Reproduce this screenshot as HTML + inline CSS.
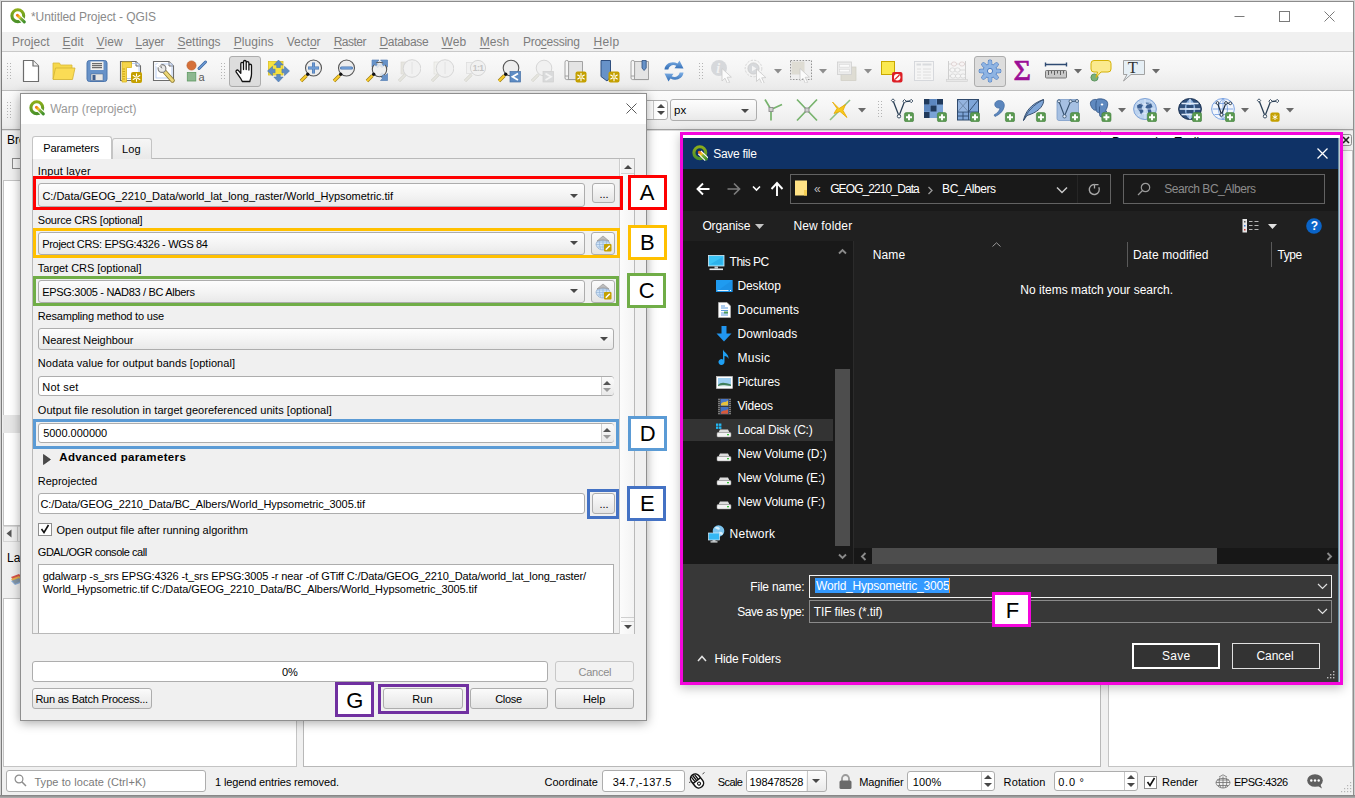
<!DOCTYPE html>
<html>
<head>
<meta charset="utf-8">
<title>QGIS - Warp (reproject)</title>
<style>
*{box-sizing:border-box;margin:0;padding:0}
html,body{width:1355px;height:798px;overflow:hidden;background:#f0f0f0;font-family:"Liberation Sans",sans-serif;font-size:11px;color:#000}
div,svg{position:absolute}
.t{position:absolute;white-space:nowrap;line-height:1}
u{text-decoration-skip-ink:none;text-underline-offset:1.500px}
.combo{border:1px solid #adadad;border-radius:3px;background:linear-gradient(#fdfdfd,#f4f4f4 50%,#e9e9e9)}
.edit{border:1px solid #adadad;border-radius:3px;background:#fff}
.btn{border:1px solid #adadad;border-radius:3px;background:linear-gradient(#fbfbfb,#f0f0f0 50%,#e4e4e4)}
.ad{width:0;height:0;border-left:4px solid transparent;border-right:4px solid transparent;border-top:4px solid #484848}
.au{width:0;height:0;border-left:4px solid transparent;border-right:4px solid transparent;border-bottom:4px solid #484848}
.hl{border-style:solid;border-width:3px;background:transparent}
.lb{border-style:solid;border-width:3px;background:#fff}
</style>
</head>
<body>
<div style="position:absolute;left:0px;top:0px;width:1355px;height:798px;background:#f0f0f0"></div>
<div style="position:absolute;left:0px;top:0px;width:1355px;height:32px;background:#fff"></div>
<svg style="position:absolute;left:10px;top:8px;" width="16" height="16" viewBox="0 0 16 16"><defs><linearGradient id="lgA1" x1="0" y1="0" x2="0" y2="1"><stop offset="0" stop-color="#8cad1a"/><stop offset="1" stop-color="#4c9229"/></linearGradient>
<linearGradient id="lgB1" x1="0" y1="0" x2="1" y2="1"><stop offset="0" stop-color="#ee7913"/><stop offset="0.3" stop-color="#f5c828"/><stop offset="0.5" stop-color="#7fb13a"/><stop offset="1" stop-color="#3f8f2a"/></linearGradient></defs>
<circle cx="7.8" cy="7.7" r="5.9" fill="none" stroke="url(#lgA1)" stroke-width="3.1"/>
<path d="M7.6 7.4 L14.6 14.2" stroke="#fff" stroke-width="5" stroke-linecap="butt"/>
<path d="M7.4 7.2 L14.3 13.9" stroke="url(#lgB1)" stroke-width="2.9" stroke-linecap="round"/></svg>
<div class="t" style="left:31.00px;top:11.02px;font-size:12px;line-height:1;color:#8a8a8a;letter-spacing:-0.071px;">*Untitled Project - QGIS</div>
<svg style="position:absolute;left:1234px;top:10px;" width="12" height="12" viewBox="0 0 12 12"><path d="M0.5 6.5H10.5" stroke="#7a7a7a" stroke-width="1"/></svg>
<svg style="position:absolute;left:1279px;top:11px;" width="11" height="11" viewBox="0 0 11 11"><rect x="0.5" y="0.5" width="10" height="10" fill="none" stroke="#7a7a7a" stroke-width="1"/></svg>
<svg style="position:absolute;left:1324px;top:11px;" width="11" height="11" viewBox="0 0 11 11"><path d="M0.5 0.5L10.5 10.5M10.5 0.5L0.5 10.5" stroke="#7a7a7a" stroke-width="1"/></svg>
<div style="position:absolute;left:0px;top:32px;width:1355px;height:20px;background:#f0f0f0"></div>
<div class="t" style="left:12.00px;top:36.02px;font-size:12px;line-height:1;color:#7d7d7d;letter-spacing:0.037px;text-underline-offset:1px;">Pro<u>j</u>ect</div>
<div class="t" style="left:62.50px;top:36.02px;font-size:12px;line-height:1;color:#7d7d7d;letter-spacing:0.131px;text-underline-offset:1px;"><u>E</u>dit</div>
<div class="t" style="left:96.50px;top:36.02px;font-size:12px;line-height:1;color:#7d7d7d;letter-spacing:0.094px;text-underline-offset:1px;"><u>V</u>iew</div>
<div class="t" style="left:135.50px;top:36.02px;font-size:12px;line-height:1;color:#7d7d7d;letter-spacing:-0.238px;text-underline-offset:1px;"><u>L</u>ayer</div>
<div class="t" style="left:177.50px;top:36.02px;font-size:12px;line-height:1;color:#7d7d7d;letter-spacing:-0.040px;text-underline-offset:1px;"><u>S</u>ettings</div>
<div class="t" style="left:233.70px;top:36.02px;font-size:12px;line-height:1;color:#7d7d7d;letter-spacing:0.087px;text-underline-offset:1px;"><u>P</u>lugins</div>
<div class="t" style="left:286.70px;top:36.02px;font-size:12px;line-height:1;color:#7d7d7d;letter-spacing:-0.030px;text-underline-offset:1px;">Vect<u>o</u>r</div>
<div class="t" style="left:333.70px;top:36.02px;font-size:12px;line-height:1;color:#7d7d7d;letter-spacing:-0.533px;text-underline-offset:1px;"><u>R</u>aster</div>
<div class="t" style="left:379.50px;top:36.02px;font-size:12px;line-height:1;color:#7d7d7d;letter-spacing:-0.328px;text-underline-offset:1px;"><u>D</u>atabase</div>
<div class="t" style="left:441.50px;top:36.02px;font-size:12px;line-height:1;color:#7d7d7d;letter-spacing:0.156px;text-underline-offset:1px;"><u>W</u>eb</div>
<div class="t" style="left:479.70px;top:36.02px;font-size:12px;line-height:1;color:#7d7d7d;letter-spacing:0.012px;text-underline-offset:1px;"><u>M</u>esh</div>
<div class="t" style="left:523.00px;top:36.02px;font-size:12px;line-height:1;color:#7d7d7d;letter-spacing:-0.277px;text-underline-offset:1px;">Pro<u>c</u>essing</div>
<div class="t" style="left:593.50px;top:36.02px;font-size:12px;line-height:1;color:#7d7d7d;letter-spacing:0.297px;text-underline-offset:1px;"><u>H</u>elp</div>
<div style="position:absolute;left:0px;top:51px;width:1355px;height:1px;background:#c9c9c9"></div>
<div style="position:absolute;left:0px;top:52px;width:1355px;height:39px;background:linear-gradient(#fafafa,#f5f5f5 45%,#ececec 90%,#e8e8e8);border-bottom:1px solid #bdbdbd"></div>
<div style="position:absolute;left:0px;top:91px;width:1355px;height:39px;background:linear-gradient(#fbfbfb,#f5f5f5 45%,#ececec 90%,#e6e6e6);border-bottom:1px solid #a0a0a0"></div>
<div style="position:absolute;left:0px;top:130px;width:1355px;height:1px;background:#dcdcdc"></div>
<svg style="position:absolute;left:7px;top:63px;" width="5" height="18" viewBox="0 0 5 18"><rect x="0" y="0" width="1" height="1" fill="#b4b4b4"/><rect x="3" y="0" width="1" height="1" fill="#b4b4b4"/><rect x="0" y="3" width="1" height="1" fill="#b4b4b4"/><rect x="3" y="3" width="1" height="1" fill="#b4b4b4"/><rect x="0" y="6" width="1" height="1" fill="#b4b4b4"/><rect x="3" y="6" width="1" height="1" fill="#b4b4b4"/><rect x="0" y="9" width="1" height="1" fill="#b4b4b4"/><rect x="3" y="9" width="1" height="1" fill="#b4b4b4"/><rect x="0" y="12" width="1" height="1" fill="#b4b4b4"/><rect x="3" y="12" width="1" height="1" fill="#b4b4b4"/><rect x="0" y="15" width="1" height="1" fill="#b4b4b4"/><rect x="3" y="15" width="1" height="1" fill="#b4b4b4"/></svg>
<svg style="position:absolute;left:7px;top:102px;" width="5" height="18" viewBox="0 0 5 18"><rect x="0" y="0" width="1" height="1" fill="#b4b4b4"/><rect x="3" y="0" width="1" height="1" fill="#b4b4b4"/><rect x="0" y="3" width="1" height="1" fill="#b4b4b4"/><rect x="3" y="3" width="1" height="1" fill="#b4b4b4"/><rect x="0" y="6" width="1" height="1" fill="#b4b4b4"/><rect x="3" y="6" width="1" height="1" fill="#b4b4b4"/><rect x="0" y="9" width="1" height="1" fill="#b4b4b4"/><rect x="3" y="9" width="1" height="1" fill="#b4b4b4"/><rect x="0" y="12" width="1" height="1" fill="#b4b4b4"/><rect x="3" y="12" width="1" height="1" fill="#b4b4b4"/><rect x="0" y="15" width="1" height="1" fill="#b4b4b4"/><rect x="3" y="15" width="1" height="1" fill="#b4b4b4"/></svg>
<svg style="position:absolute;left:221px;top:63px;" width="5" height="18" viewBox="0 0 5 18"><rect x="0" y="0" width="1" height="1" fill="#b4b4b4"/><rect x="3" y="0" width="1" height="1" fill="#b4b4b4"/><rect x="0" y="3" width="1" height="1" fill="#b4b4b4"/><rect x="3" y="3" width="1" height="1" fill="#b4b4b4"/><rect x="0" y="6" width="1" height="1" fill="#b4b4b4"/><rect x="3" y="6" width="1" height="1" fill="#b4b4b4"/><rect x="0" y="9" width="1" height="1" fill="#b4b4b4"/><rect x="3" y="9" width="1" height="1" fill="#b4b4b4"/><rect x="0" y="12" width="1" height="1" fill="#b4b4b4"/><rect x="3" y="12" width="1" height="1" fill="#b4b4b4"/><rect x="0" y="15" width="1" height="1" fill="#b4b4b4"/><rect x="3" y="15" width="1" height="1" fill="#b4b4b4"/></svg>
<svg style="position:absolute;left:699px;top:63px;" width="5" height="18" viewBox="0 0 5 18"><rect x="0" y="0" width="1" height="1" fill="#b4b4b4"/><rect x="3" y="0" width="1" height="1" fill="#b4b4b4"/><rect x="0" y="3" width="1" height="1" fill="#b4b4b4"/><rect x="3" y="3" width="1" height="1" fill="#b4b4b4"/><rect x="0" y="6" width="1" height="1" fill="#b4b4b4"/><rect x="3" y="6" width="1" height="1" fill="#b4b4b4"/><rect x="0" y="9" width="1" height="1" fill="#b4b4b4"/><rect x="3" y="9" width="1" height="1" fill="#b4b4b4"/><rect x="0" y="12" width="1" height="1" fill="#b4b4b4"/><rect x="3" y="12" width="1" height="1" fill="#b4b4b4"/><rect x="0" y="15" width="1" height="1" fill="#b4b4b4"/><rect x="3" y="15" width="1" height="1" fill="#b4b4b4"/></svg>
<svg style="position:absolute;left:878px;top:101px;" width="5" height="18" viewBox="0 0 5 18"><rect x="0" y="0" width="1" height="1" fill="#b4b4b4"/><rect x="3" y="0" width="1" height="1" fill="#b4b4b4"/><rect x="0" y="3" width="1" height="1" fill="#b4b4b4"/><rect x="3" y="3" width="1" height="1" fill="#b4b4b4"/><rect x="0" y="6" width="1" height="1" fill="#b4b4b4"/><rect x="3" y="6" width="1" height="1" fill="#b4b4b4"/><rect x="0" y="9" width="1" height="1" fill="#b4b4b4"/><rect x="3" y="9" width="1" height="1" fill="#b4b4b4"/><rect x="0" y="12" width="1" height="1" fill="#b4b4b4"/><rect x="3" y="12" width="1" height="1" fill="#b4b4b4"/><rect x="0" y="15" width="1" height="1" fill="#b4b4b4"/><rect x="3" y="15" width="1" height="1" fill="#b4b4b4"/></svg>
<svg style="position:absolute;left:19px;top:59px;" width="24" height="24" viewBox="0 0 24 24"><path d="M4.5 1.5H14L19.5 7V22.5H4.5Z" fill="#fff" stroke="#6c6c6c" stroke-width="1.2" stroke-linejoin="round"/><path d="M14 1.5V7H19.5" fill="#f4f4f4" stroke="#6c6c6c" stroke-width="1.2" stroke-linejoin="round"/></svg>
<svg style="position:absolute;left:52px;top:59px;" width="24" height="24" viewBox="0 0 24 24"><path d="M1 4H7.5L8.5 6H20V20H1Z" fill="#f6d84c" stroke="#d9b93a" stroke-width="0.8"/><path d="M3.5 9H23L20.5 20.5H1Z" fill="#fbdc55" stroke="#d3b234" stroke-width="0.8" stroke-linejoin="round"/></svg>
<svg style="position:absolute;left:85px;top:59px;" width="24" height="24" viewBox="0 0 24 24"><rect x="2" y="1.5" width="20" height="21" rx="2.5" fill="#6792c8" stroke="#4d76ad" stroke-width="1"/><rect x="5.5" y="2.5" width="13" height="8.5" fill="#f1efec"/><path d="M7 4.7H17M7 6.7H17M7 8.7H17" stroke="#3a3a3a" stroke-width="0.9"/><rect x="6" y="15" width="12" height="6.5" fill="#e9e7e4" stroke="#44638d" stroke-width="0.5"/><rect x="7.5" y="16" width="3" height="5" fill="#3f5d8c"/></svg>
<svg style="position:absolute;left:118px;top:59px;" width="24" height="24" viewBox="0 0 24 24"><path d="M2.5 2.5H18L22.5 7V21.5H2.5Z" fill="#fff" stroke="#6c6c6c" stroke-width="1.1"/><path d="M18 2.5V7H22.5" fill="#f0f0f0" stroke="#6c6c6c" stroke-width="1"/><rect x="5" y="4.5" width="16" height="15" fill="none" stroke="#a9c1ee" stroke-width="0.8"/><path d="M4 3H13.5V8.5H8.5V23H4Z" fill="#f5d54a" stroke="#d9b51d" stroke-width="0.8"/><path d="M4.5 10H7M4.5 12.5H7M4.5 15H7M4.5 17.5H7M4.5 20H7" stroke="#c29d10" stroke-width="0.8"/><rect x="13" y="13" width="11" height="11" rx="2" fill="#c4a000"/><g stroke="#fff" stroke-width="1.100" stroke-linecap="round"><path d="M18.5 14.8V22.2M15.2 16.5L21.8 20.5M15.2 20.5L21.8 16.5"/></g><circle cx="18.5" cy="18.5" r="1.3" fill="#e8d36a"/></svg>
<svg style="position:absolute;left:151px;top:59px;" width="24" height="24" viewBox="0 0 24 24"><path d="M2.5 2.5H18L22.5 7V21.5H2.5Z" fill="#fff" stroke="#6c6c6c" stroke-width="1.1"/><path d="M18 2.5V7H22.5" fill="#f0f0f0" stroke="#6c6c6c" stroke-width="1"/><rect x="5" y="5" width="16" height="14" fill="none" stroke="#a9c1ee" stroke-width="0.8"/><path d="M13.500 12.500L21.500 21.500" stroke="#8d7a2e" stroke-width="4.400" stroke-linecap="round"/><path d="M13.500 12.500L21.500 21.500" stroke="#ecd778" stroke-width="2.800" stroke-linecap="round"/><circle cx="11" cy="9.500" r="3.900" fill="#e9e9e9" stroke="#7d7d7d" stroke-width="1.100"/><path d="M5.500 6.500L10.500 9L9 4Z" fill="#fff" stroke="#fff" stroke-width="1.500"/><path d="M8.300 6.800L10.800 9.300L9.600 5.800" fill="none" stroke="#7d7d7d" stroke-width="0.900"/></svg>
<svg style="position:absolute;left:184px;top:59px;" width="24" height="24" viewBox="0 0 24 24"><circle cx="7.5" cy="6.5" r="4.6" fill="#d5703a" stroke="#b75a28" stroke-width="0.6"/><path d="M15 9.5L21.5 3" stroke="#3d6aa5" stroke-width="3" stroke-linecap="round"/><path d="M15 9.5L21.5 3" stroke="#6f9bd3" stroke-width="1.4" stroke-linecap="round"/><rect x="3.3" y="13.5" width="8.5" height="8.5" fill="#8db78f" stroke="#5f9a63" stroke-width="0.8"/><text x="14.500" y="21.800" font-size="11" fill="#5a5a5a">a</text></svg>
<div style="position:absolute;left:229px;top:56px;width:32px;height:31px;background:#dddddd;border:1px solid #adadad;border-radius:3px"></div>
<svg style="position:absolute;left:233px;top:59px;" width="24" height="24" viewBox="0 0 24 24"><path d="M9.300 22.500C8 19.500 5.500 16.500 3.200 13.200C2.300 11.700 4.200 10.300 5.500 11.600L7.800 14.300V4.800C7.800 2.900 10.500 2.900 10.500 4.800V10.500V2.900C10.500 1 13.200 1 13.200 2.900V10.500V4C13.200 2.200 15.900 2.200 15.900 4V11V6.500C15.900 4.800 18.500 4.800 18.500 6.500V15C18.500 18.500 17.300 20 16.800 22.500Z" fill="#fff" stroke="#111" stroke-width="1.300" stroke-linejoin="round"/></svg>
<svg style="position:absolute;left:265.5px;top:59px;" width="24" height="24" viewBox="0 0 24 24"><rect x="2.500" y="2.500" width="14.500" height="13.500" fill="#f7e13e" stroke="#dcc021" stroke-width="0.800"/><g fill="#5e8cc4" stroke="#436ea5" stroke-width="0.500"><path d="M12.500 1L17.200 6H14.300V8.800H10.700V6H7.800Z"/><path d="M12.500 23L17.200 18H14.300V15.200H10.700V18H7.800Z"/><path d="M1.500 12L6.500 7.300V10.200H9.300V13.800H6.500V16.700Z"/><path d="M23.500 12L18.500 7.300V10.200H15.700V13.800H18.500V16.700Z"/></g><rect x="9.600" y="9.100" width="5.800" height="5.800" fill="#f7e13e"/></svg>
<svg style="position:absolute;left:299px;top:59px;" width="24" height="24" viewBox="0 0 24 24"><path d="M2 22L7.5 16.5" stroke="#9c7c12" stroke-width="3.4"/><path d="M2 22L7.5 16.5" stroke="#f8cb2c" stroke-width="2.2"/><circle cx="14.5" cy="9" r="8" fill="#ededed" stroke="#555" stroke-width="1.1"/><circle cx="8.7" cy="15.3" r="1.7" fill="#111"/><path d="M14.500 3.500V14.500M9 9H20" stroke="#4674af" stroke-width="3"/><path d="M14.500 4V14M9.500 9H19.500" stroke="#6d9ad2" stroke-width="1.900"/></svg>
<svg style="position:absolute;left:331.5px;top:59px;" width="24" height="24" viewBox="0 0 24 24"><path d="M2 22L7.5 16.5" stroke="#9c7c12" stroke-width="3.4"/><path d="M2 22L7.5 16.5" stroke="#f8cb2c" stroke-width="2.2"/><circle cx="14.5" cy="9" r="8" fill="#ededed" stroke="#555" stroke-width="1.1"/><circle cx="8.7" cy="15.3" r="1.7" fill="#111"/><path d="M9.500 9H19.500" stroke="#4674af" stroke-width="3" stroke-linecap="round"/><path d="M9.900 9H19.100" stroke="#6d9ad2" stroke-width="1.800" stroke-linecap="round"/></svg>
<svg style="position:absolute;left:364.5px;top:59px;" width="24" height="24" viewBox="0 0 24 24"><g fill="#6792c8" stroke="#4a74ab" stroke-width="0.6"><path d="M7 1H14L12 3.2L15 6L12.5 8.8L9.5 5.8L7 8Z"/><path d="M22.5 1H15.5L17.5 3.2L14.5 6L17 8.8L20 5.8L22.5 8Z"/><path d="M22.5 21.5H15.5L17.5 19.3L14.5 16.5L17 13.7L20 16.7L22.5 14.5Z"/></g><path d="M2 22L7.5 16.5" stroke="#9c7c12" stroke-width="3.4"/><path d="M2 22L7.5 16.5" stroke="#f8cb2c" stroke-width="2.2"/><circle cx="14.5" cy="10.5" r="7.2" fill="#ededed" fill-opacity="0.85" stroke="#555" stroke-width="1.1"/><circle cx="8.7" cy="15.3" r="1.7" fill="#111"/><g fill="#6792c8"><path d="M7.2 1.2H12.5L10.5 3.5L12.6 5.6L11 7.2L9 5.2L7.2 7Z"/><path d="M22.3 1.2H17L19 3.5L16.9 5.6L18.5 7.2L20.5 5.2L22.3 7Z"/><path d="M22.3 21.3H17L19 19L16.9 16.9L18.5 15.3L20.5 17.3L22.3 15.5Z"/></g></svg>
<svg style="position:absolute;left:397px;top:59px;" width="24" height="24" viewBox="0 0 24 24"><rect x="4" y="3" width="9" height="12" fill="#e6e5df" stroke="#d9d8d2" stroke-width="0.6"/><path d="M2 22L8.5 15.5" stroke="#cfcfc8" stroke-width="3"/><path d="M2 22L8.5 15.5" stroke="#e6e5df" stroke-width="1.8"/><circle cx="15" cy="9.5" r="8.8" fill="#f1f1f1" stroke="#d6d6d6" stroke-width="1"/><path d="M15 3V15" stroke="#e2e2e2" stroke-width="1"/></svg>
<svg style="position:absolute;left:430px;top:59px;" width="24" height="24" viewBox="0 0 24 24"><rect x="4" y="3" width="9" height="12" fill="#f1f1ee" stroke="#dddcd8" stroke-width="0.6"/><path d="M2 22L8.5 15.5" stroke="#cfcfc8" stroke-width="3"/><path d="M2 22L8.5 15.5" stroke="#e6e5df" stroke-width="1.8"/><circle cx="15" cy="9.5" r="8.8" fill="#f1f1f1" stroke="#d6d6d6" stroke-width="1"/><path d="M15 3V15" stroke="#e2e2e2" stroke-width="1"/></svg>
<svg style="position:absolute;left:463px;top:59px;" width="24" height="24" viewBox="0 0 24 24"><rect x="3.5" y="3.5" width="9" height="11" fill="#f1f1f1" stroke="#dcdcdc" stroke-width="0.7"/><path d="M2 22L8.5 15.5" stroke="#cfcfc8" stroke-width="3"/><path d="M2 22L8.5 15.5" stroke="#e6e5df" stroke-width="1.8"/><circle cx="15" cy="9" r="7.6" fill="#f1f1f1" stroke="#d6d6d6" stroke-width="1"/><text x="9.7" y="12.3" font-weight="bold" font-size="8.5" fill="#c4c4c4" letter-spacing="-0.5">1:1</text></svg>
<svg style="position:absolute;left:497px;top:59px;" width="24" height="24" viewBox="0 0 24 24"><path d="M2 22L7.5 16.5" stroke="#9c7c12" stroke-width="3.4"/><path d="M2 22L7.5 16.5" stroke="#f8cb2c" stroke-width="2.2"/><circle cx="14" cy="9" r="7.8" fill="#ededed" stroke="#555" stroke-width="1.1"/><circle cx="8.7" cy="15.3" r="1.7" fill="#111"/><rect x="13" y="12.5" width="10.5" height="10.5" fill="#5e8cc4" stroke="#456fa6" stroke-width="0.7"/><path d="M21 14.5L15.5 17.8L21 21" fill="none" stroke="#fff" stroke-width="1.8"/></svg>
<svg style="position:absolute;left:530px;top:59px;" width="24" height="24" viewBox="0 0 24 24"><path d="M2 22L8.5 15.5" stroke="#cfcfc8" stroke-width="3"/><path d="M2 22L8.5 15.5" stroke="#e6e5df" stroke-width="1.8"/><circle cx="14" cy="9" r="7.8" fill="#f1f1f1" stroke="#d6d6d6" stroke-width="1"/><rect x="13" y="12.5" width="10.5" height="10.5" fill="#d9dadb" stroke="#cfcfcf" stroke-width="0.7"/><path d="M15.5 14.5L21 17.8L15.5 21" fill="none" stroke="#f3f3f3" stroke-width="1.8"/></svg>
<svg style="position:absolute;left:563px;top:59px;" width="24" height="24" viewBox="0 0 24 24"><path d="M5.5 2.5H19.5V20.5H5.5Z" fill="#e4e4e4" stroke="#9a9a9a" stroke-width="0.9"/><path d="M2 3.2a1.8 1.8 0 0 1 3.6 0V17H2Z" fill="#f6f6f6" stroke="#9a9a9a" stroke-width="0.9"/><path d="M2 17V19a1.7 1.7 0 0 0 1.7 1.6H19.5" fill="none" stroke="#9a9a9a" stroke-width="0.9"/><rect x="12.5" y="12.5" width="11" height="11" rx="2" fill="#c4a000"/><g stroke="#fff" stroke-width="1.100" stroke-linecap="round"><path d="M18.0 14.3V21.7M14.7 16.0L21.3 20.0M14.7 20.0L21.3 16.0"/></g><circle cx="18.0" cy="18.0" r="1.3" fill="#e8d36a"/></svg>
<svg style="position:absolute;left:596px;top:59px;" width="24" height="24" viewBox="0 0 24 24"><path d="M5 1.5H14.5V18L11 22L5 17.5Z" fill="#6792c8" stroke="#2f4f7f" stroke-width="1"/><rect x="12.5" y="12.5" width="11" height="11" rx="2" fill="#c4a000"/><g stroke="#fff" stroke-width="1.100" stroke-linecap="round"><path d="M18.0 14.3V21.7M14.7 16.0L21.3 20.0M14.7 20.0L21.3 16.0"/></g><circle cx="18.0" cy="18.0" r="1.3" fill="#e8d36a"/></svg>
<svg style="position:absolute;left:629px;top:59px;" width="24" height="24" viewBox="0 0 24 24"><path d="M5.5 2.5H19.5V20.5H5.5Z" fill="#e4e4e4" stroke="#9a9a9a" stroke-width="0.9"/><path d="M2 3.2a1.8 1.8 0 0 1 3.6 0V17H2Z" fill="#f6f6f6" stroke="#9a9a9a" stroke-width="0.9"/><path d="M2 17V19a1.7 1.7 0 0 0 1.7 1.6H19.5" fill="none" stroke="#9a9a9a" stroke-width="0.9"/><path d="M13 1.5H17.2V9L15.1 11.5L13 9Z" fill="#6792c8" stroke="#2f4f7f" stroke-width="0.8"/></svg>
<svg style="position:absolute;left:662px;top:59px;" width="24" height="24" viewBox="0 0 24 24"><defs><linearGradient id="rf" x1="0" y1="0" x2="0" y2="1"><stop offset="0" stop-color="#7fb0e6"/><stop offset="1" stop-color="#2f6bb4"/></linearGradient></defs><path d="M2.5 10.5C3 4.5 10 1.5 15.5 4.5L17.5 1.5L21.5 9.5L12.5 9.2L14.3 6.7C11 5 7.2 6.5 6.3 10.5Z" fill="url(#rf)"/><path d="M21.5 13.5C21 19.5 14 22.5 8.5 19.5L6.5 22.5L2.5 14.5L11.5 14.8L9.7 17.3C13 19 16.8 17.5 17.7 13.5Z" fill="url(#rf)"/></svg>
<svg style="position:absolute;left:710px;top:59px;" width="24" height="24" viewBox="0 0 24 24"><circle cx="9" cy="9" r="8" fill="#d6d8db"/><text x="6.3" y="14" style="font-family:Liberation Serif,serif" font-style="italic" font-weight="bold" font-size="14" fill="#f1f1f1">i</text><path d="M12 9.5l0 12.500l3-2.800l2.400 5.100l2.200-1l-2.400-5l4.200-0.200Z" fill="#fbfbfb" stroke="#c9c9c9" stroke-width="0.8" stroke-linejoin="round"/></svg>
<svg style="position:absolute;left:744px;top:59px;" width="24" height="24" viewBox="0 0 24 24"><circle cx="9.5" cy="9.5" r="8.3" fill="none" stroke="#d4d4d4" stroke-width="1" stroke-dasharray="2.2 1.4"/><circle cx="9.5" cy="9.5" r="5.6" fill="#d7d9dc" stroke="#c9c9c9" stroke-width="0.8"/><path d="M8 6.8L12.5 9.5L8 12.2Z" fill="#f4f4f4"/><path d="M12.5 10l0 12.500l3-2.800l2.400 5.100l2.200-1l-2.400-5l4.200-0.200Z" fill="#fbfbfb" stroke="#c9c9c9" stroke-width="0.8" stroke-linejoin="round"/></svg>
<svg style="position:absolute;left:774px;top:69px;" width="8" height="5" viewBox="0 0 8 5"><path d="M0 0H8L4 4.5Z" fill="#8d8d8d"/></svg>
<svg style="position:absolute;left:789px;top:59px;" width="24" height="24" viewBox="0 0 24 24"><rect x="1.5" y="1.5" width="21" height="19" fill="#efefef" stroke="#8a8a8a" stroke-width="0.9" stroke-dasharray="1.6 1.4"/><rect x="2.5" y="2.5" width="13" height="13" fill="#dedcd3"/><path d="M11 9.5l0 12.500l3-2.800l2.400 5.100l2.200-1l-2.400-5l4.200-0.200Z" fill="#fbfbfb" stroke="#c9c9c9" stroke-width="0.8" stroke-linejoin="round"/></svg>
<svg style="position:absolute;left:819px;top:69px;" width="8" height="5" viewBox="0 0 8 5"><path d="M0 0H8L4 4.5Z" fill="#8d8d8d"/></svg>
<svg style="position:absolute;left:834.5px;top:59px;" width="24" height="24" viewBox="0 0 24 24"><rect x="6" y="8" width="15" height="13.5" fill="#dedcd3" stroke="#cfcdc4" stroke-width="0.7"/><rect x="2.5" y="3" width="14" height="12.5" fill="#ececec" stroke="#cfcfcf" stroke-width="0.8"/><rect x="4.5" y="5.5" width="10" height="2.6" fill="#fbfbfb" stroke="#d4d4d4" stroke-width="0.5"/><rect x="4.5" y="10.3" width="10" height="2.6" fill="#fbfbfb" stroke="#d4d4d4" stroke-width="0.5"/></svg>
<svg style="position:absolute;left:864px;top:69px;" width="8" height="5" viewBox="0 0 8 5"><path d="M0 0H8L4 4.5Z" fill="#8d8d8d"/></svg>
<svg style="position:absolute;left:880px;top:59px;" width="24" height="24" viewBox="0 0 24 24"><rect x="1.5" y="2.5" width="13" height="13" fill="#fbe94f" stroke="#c9a800" stroke-width="1"/><rect x="12" y="13" width="10.5" height="10.5" rx="2" fill="#dc1f26"/><circle cx="17.2" cy="18.2" r="3.2" fill="#fff"/><path d="M15 20.4L19.4 16" stroke="#dc1f26" stroke-width="1.3"/></svg>
<svg style="position:absolute;left:912px;top:59px;" width="24" height="24" viewBox="0 0 24 24"><rect x="2.5" y="2.5" width="19" height="19" fill="#f5f5f5" stroke="#d3d6da" stroke-width="0.9"/><rect x="4.5" y="4.5" width="4.5" height="2" fill="#d9dbde"/><rect x="10.5" y="4.5" width="9" height="2" fill="#d9dbde"/><path d="M5 10H9M11 10H19M5 13H9M11 13H19M5 16H9M11 16H19M5 19H9M11 19H19" stroke="#dcdcdc" stroke-width="0.9"/></svg>
<svg style="position:absolute;left:945px;top:59px;" width="24" height="24" viewBox="0 0 24 24"><path d="M3.5 2V21M20.5 2V21" stroke="#cfcfcf" stroke-width="1"/><rect x="1.5" y="20.5" width="21" height="2" fill="#e8e8e8" stroke="#cfcfcf" stroke-width="0.6"/><path d="M3.5 5H20.5M3.5 11H20.5M3.5 17H20.5" stroke="#d4d4d4" stroke-width="0.8"/><g fill="#f7f4f4" stroke="#d9c9c9" stroke-width="0.7"><ellipse cx="9" cy="5" rx="2.6" ry="2.1"/><ellipse cx="17" cy="5" rx="2.6" ry="2.1"/></g><g fill="#f7f7f7" stroke="#d0d0d0" stroke-width="0.7"><ellipse cx="7.5" cy="11" rx="2.6" ry="2.1"/><ellipse cx="12.5" cy="11" rx="2.6" ry="2.1"/><ellipse cx="8" cy="17" rx="2.6" ry="2.1"/><ellipse cx="13" cy="17" rx="2.6" ry="2.1"/><ellipse cx="18" cy="17" rx="2.6" ry="2.1"/></g></svg>
<div style="position:absolute;left:974px;top:56px;width:32px;height:31px;background:#dddddd;border:1px solid #adadad;border-radius:3px"></div>
<svg style="position:absolute;left:978px;top:59px;" width="24" height="24" viewBox="0 0 24 24"><path d="M18.00 12.00L21.20 12.00M16.24 16.24L18.51 18.51M12.00 18.00L12.00 21.20M7.76 16.24L5.49 18.51M6.00 12.00L2.80 12.00M7.76 7.76L5.49 5.49M12.00 6.00L12.00 2.80M16.24 7.76L18.51 5.49" stroke="#3f73bd" stroke-width="4.400" stroke-linecap="round"/><path d="M18.00 12.00L21.20 12.00M16.24 16.24L18.51 18.51M12.00 18.00L12.00 21.20M7.76 16.24L5.49 18.51M6.00 12.00L2.80 12.00M7.76 7.76L5.49 5.49M12.00 6.00L12.00 2.80M16.24 7.76L18.51 5.49" stroke="#8fb4e3" stroke-width="3.100" stroke-linecap="round"/><circle cx="12" cy="12" r="6.900" fill="#8fb4e3" stroke="#3f73bd" stroke-width="0.700"/><path d="M17.00 12.00L21.20 12.00M15.54 15.54L18.51 18.51M12.00 17.00L12.00 21.20M8.46 15.54L5.49 18.51M7.00 12.00L2.80 12.00M8.46 8.46L5.49 5.49M12.00 7.00L12.00 2.80M15.54 8.46L18.51 5.49" stroke="#8fb4e3" stroke-width="3.100" stroke-linecap="round"/><circle cx="12" cy="12" r="2.600" fill="#eeeeee" stroke="#3f73bd" stroke-width="0.900"/></svg>
<svg style="position:absolute;left:1013px;top:56px;" width="22" height="30" viewBox="0 0 22 30"><text x="0.500" y="24.300" style="font-family:Liberation Serif,serif" font-size="30" fill="#9b0f96" stroke="#9b0f96" stroke-width="0.700">&#931;</text></svg>
<svg style="position:absolute;left:1044px;top:59px;" width="24" height="24" viewBox="0 0 24 24"><path d="M1.5 5.5H22.5M1.5 3.5V7.5M22.5 3.5V7.5" stroke="#2e4a72" stroke-width="1.4"/><rect x="1.5" y="11.5" width="21" height="7.5" rx="1" fill="#c9c9c9" stroke="#777" stroke-width="1"/><path d="M4.5 12V16M7.5 12V14.5M10.5 12V16M13.5 12V14.5M16.5 12V16M19.5 12V14.5" stroke="#555" stroke-width="0.9"/></svg>
<svg style="position:absolute;left:1074px;top:69px;" width="8" height="5" viewBox="0 0 8 5"><path d="M0 0H8L4 4.5Z" fill="#6a6a6a"/></svg>
<svg style="position:absolute;left:1089px;top:59px;" width="24" height="24" viewBox="0 0 24 24"><circle cx="5.5" cy="18.5" r="3.6" fill="#7bb07c" stroke="#4f8a52" stroke-width="0.8"/><path d="M5 1.5H19a3 3 0 0 1 3 3V10a3 3 0 0 1-3 3H12L7 18.5L8.5 13H5a3 3 0 0 1-3-3V4.500a3 3 0 0 1 3-3Z" fill="#fbea8e" stroke="#d4b106" stroke-width="1"/></svg>
<svg style="position:absolute;left:1122px;top:59px;" width="24" height="24" viewBox="0 0 24 24"><path d="M1.500 1.500H22.500V15.500H9L1.500 22L5 15.500H1.500Z" fill="#e6eff5" stroke="#9a9a9a" stroke-width="0.9"/><text x="5.800" y="13.800" style="font-family:Liberation Serif,serif" font-size="16.500" fill="#333">T</text></svg>
<svg style="position:absolute;left:1152px;top:69px;" width="8" height="5" viewBox="0 0 8 5"><path d="M0 0H8L4 4.5Z" fill="#6a6a6a"/></svg>
<div class="edit" style="position:absolute;left:600px;top:100px;width:68px;height:20px;"></div>
<div style="position:absolute;left:653px;top:101px;width:1px;height:18px;background:#c9c9c9"></div>
<div class="au" style="position:absolute;left:656.5px;top:104px;width:8px;height:4px;"></div>
<div class="ad" style="position:absolute;left:656.5px;top:111px;width:8px;height:4px;"></div>
<div class="combo" style="position:absolute;left:669.5px;top:99px;width:87px;height:22px;"></div>
<div class="t" style="left:674.00px;top:105.27px;font-size:11.5px;line-height:1;color:#000;letter-spacing:0.000px;">px</div>
<div class="ad" style="position:absolute;left:741px;top:108.5px;width:8px;height:4px;"></div>
<svg style="position:absolute;left:759px;top:97.6px;" width="24" height="24" viewBox="0 0 24 24"><path d="M6 1.5L12 11.5V22.5M12 11.5L23 6.500" fill="none" stroke="#77b36d" stroke-width="1.7"/><rect x="10" y="9.500" width="4" height="4" fill="#cfcfcf" stroke="#8a8a8a" stroke-width="0.9"/></svg>
<svg style="position:absolute;left:795px;top:97.6px;" width="24" height="24" viewBox="0 0 24 24"><path d="M2 1.5L22 22.500M22 1.500L2 22.500" stroke="#77b36d" stroke-width="1.7"/><rect x="10" y="10" width="4" height="4" fill="#cfcfcf" stroke="#8a8a8a" stroke-width="0.9"/></svg>
<svg style="position:absolute;left:828px;top:97.6px;" width="24" height="24" viewBox="0 0 24 24"><path d="M2 22L22 2" stroke="#8cc084" stroke-width="1.600"/><path d="M4.500 4L11 10.500L17.500 6.500L15 12.500L19 19.500L12 13.500L6 15.500L9 10.500Z" fill="#f8c91a" stroke="#e6a800" stroke-width="0.800" stroke-linejoin="round"/></svg>
<svg style="position:absolute;left:858px;top:108.3px;" width="8" height="5" viewBox="0 0 8 5"><path d="M0 0H8L4 4.5Z" fill="#6a6a6a"/></svg>
<svg style="position:absolute;left:890px;top:97.6px;" width="24" height="24" viewBox="0 0 24 24"><path d="M3 2.500L9 18L14.500 3.500L21.500 3" fill="none" stroke="#2a3f55" stroke-width="1.300"/><g fill="#fff" stroke="#2a3f55" stroke-width="0.900"><path d="M3 0.800L4.700 2.500L3 4.200L1.300 2.500Z"/><path d="M14.500 1.500L16.200 3.200L14.500 4.900L12.800 3.200Z"/><path d="M21.200 1.300L22.900 3L21.200 4.700L19.500 3Z"/><circle cx="9" cy="18.300" r="1.700"/></g><rect x="14.4" y="14.6" width="9.200" height="9.200" rx="1.800" fill="#5b9a52" stroke="#3f7f3a" stroke-width="0.6"/><path d="M19.0 16.2V22.2M16.0 19.2H22.0" stroke="#fff" stroke-width="1.9"/></svg>
<svg style="position:absolute;left:923px;top:97.6px;" width="24" height="24" viewBox="0 0 24 24"><rect x="1" y="1" width="19" height="19" fill="#7aa3d6"/><g fill="#203a5c"><rect x="1" y="1" width="5.500" height="5.500"/><rect x="14" y="1" width="6" height="5.500"/><rect x="7.500" y="7.500" width="6" height="6"/><rect x="1" y="14" width="5.500" height="6"/></g><g fill="#5c87bf"><rect x="7" y="1" width="6.500" height="6"/><rect x="1" y="7" width="6" height="6.500"/></g><rect x="14.4" y="14.6" width="9.200" height="9.200" rx="1.800" fill="#5b9a52" stroke="#3f7f3a" stroke-width="0.6"/><path d="M19.0 16.2V22.2M16.0 19.2H22.0" stroke="#fff" stroke-width="1.9"/></svg>
<svg style="position:absolute;left:956px;top:97.6px;" width="24" height="24" viewBox="0 0 24 24"><rect x="1.500" y="1.500" width="21" height="20.500" fill="#7ea5d8" stroke="#2f4a6d" stroke-width="1"/><path d="M1.500 14H22.500M12.500 1.500V22M1.500 1.500L12.500 14M12.500 1.500L1.500 14M22.500 1.500L12.500 14M7 14V22M1.500 18H12.500" stroke="#2f4a6d" stroke-width="0.900" fill="none"/><rect x="2" y="2" width="10" height="11.500" fill="#a9c4e6" fill-opacity="0.5"/><rect x="14.4" y="14.6" width="9.200" height="9.200" rx="1.800" fill="#5b9a52" stroke="#3f7f3a" stroke-width="0.6"/><path d="M19.0 16.2V22.2M16.0 19.2H22.0" stroke="#fff" stroke-width="1.9"/></svg>
<svg style="position:absolute;left:991px;top:97.6px;" width="24" height="24" viewBox="0 0 24 24"><path d="M8.500 2.500C12.500 2.500 14 6 13 9.500C12 13.500 8 17 4 18.500L3 17C6.500 15 8.800 12.500 9 10C6 10.500 3.500 8.800 3.800 6C4 3.800 6 2.500 8.500 2.500Z" fill="#5b86bd" stroke="#3e689f" stroke-width="0.700"/><rect x="14.4" y="14.6" width="9.200" height="9.200" rx="1.800" fill="#5b9a52" stroke="#3f7f3a" stroke-width="0.6"/><path d="M19.0 16.2V22.2M16.0 19.2H22.0" stroke="#fff" stroke-width="1.9"/></svg>
<svg style="position:absolute;left:1022px;top:97.6px;" width="24" height="24" viewBox="0 0 24 24"><path d="M1.500 22.500C3 15 8 6 21.500 1.500C22.500 6 18 13 8 16.500L5 17.500Z" fill="#7fa6d8" stroke="#2c4566" stroke-width="0.900" stroke-linejoin="round"/><path d="M1.500 22.500C5 14 11 7 21.500 1.500" fill="none" stroke="#2c4566" stroke-width="0.800"/><rect x="14.4" y="14.6" width="9.200" height="9.200" rx="1.800" fill="#5b9a52" stroke="#3f7f3a" stroke-width="0.6"/><path d="M19.0 16.2V22.2M16.0 19.2H22.0" stroke="#fff" stroke-width="1.9"/></svg>
<svg style="position:absolute;left:1055.5px;top:97.6px;" width="24" height="24" viewBox="0 0 24 24"><rect x="1" y="1.500" width="21.500" height="21" rx="2" fill="#a6c0e2" stroke="#7c9cc8" stroke-width="0.800"/><path d="M3 3.500L8.500 18L14.500 3.500L21 3" fill="none" stroke="#34506f" stroke-width="1.100"/><g fill="#dfe9f6" stroke="#34506f" stroke-width="0.800"><circle cx="3" cy="3.300" r="1.500"/><circle cx="14.500" cy="3.300" r="1.500"/><circle cx="21" cy="3" r="1.500"/><circle cx="8.500" cy="18.300" r="1.700"/></g><rect x="14.4" y="14.6" width="9.200" height="9.200" rx="1.800" fill="#5b9a52" stroke="#3f7f3a" stroke-width="0.6"/><path d="M19.0 16.2V22.2M16.0 19.2H22.0" stroke="#fff" stroke-width="1.9"/></svg>
<svg style="position:absolute;left:1088px;top:97.6px;" width="24" height="24" viewBox="0 0 24 24"><path d="M3 8C1 4 4 0.800 8.500 1.500C10 0.500 16 0.500 18 2.500C21 4 19.500 10 17.500 12.500L19 13.500L15.500 14.500C15.800 17 15 19 13.500 19C11.500 19 11.500 17 11.500 14.500C10 15 8.500 14 8 12C6 13 4 10.500 3 8Z" fill="#5f89bf" stroke="#2f5283" stroke-width="0.800"/><path d="M8.500 2.500C7.500 6 8 9.500 8.200 12M11.500 8.500V14.500" stroke="#2f5283" stroke-width="0.800" fill="none"/><ellipse cx="14" cy="6.500" rx="1.300" ry="0.900" fill="#fff"/><rect x="13.8" y="14.6" width="9.200" height="9.200" rx="1.800" fill="#5b9a52" stroke="#3f7f3a" stroke-width="0.6"/><path d="M18.4 16.2V22.2M15.4 19.2H21.4" stroke="#fff" stroke-width="1.9"/></svg>
<svg style="position:absolute;left:1118px;top:108.3px;" width="8" height="5" viewBox="0 0 8 5"><path d="M0 0H8L4 4.5Z" fill="#6a6a6a"/></svg>
<svg style="position:absolute;left:1133px;top:97.6px;" width="24" height="24" viewBox="0 0 24 24"><ellipse cx="12" cy="11" rx="11.400" ry="10.500" fill="#bcd3ef" stroke="#7ea2d6" stroke-width="1"/><path d="M4 7.500L8 5L10 7L8.500 10L10.500 13L8 17L6.500 13L4.500 11ZM12.500 4.500L18 5L19.500 9L17.500 10L18.500 14L15.500 16.500L14.500 11L12 9.500L14 7Z" fill="#3a5f92"/><path d="M2 11H22M12 1V21M5 4.500C9 7 15 7 19 4.500M5 17.500C9 15 15 15 19 17.500" stroke="#e6eefb" stroke-width="0.700" fill="none"/><rect x="14.4" y="14.6" width="9.200" height="9.200" rx="1.800" fill="#5b9a52" stroke="#3f7f3a" stroke-width="0.6"/><path d="M19.0 16.2V22.2M16.0 19.2H22.0" stroke="#fff" stroke-width="1.9"/></svg>
<svg style="position:absolute;left:1163px;top:108.3px;" width="8" height="5" viewBox="0 0 8 5"><path d="M0 0H8L4 4.5Z" fill="#6a6a6a"/></svg>
<svg style="position:absolute;left:1178px;top:97.6px;" width="24" height="24" viewBox="0 0 24 24"><ellipse cx="12" cy="11" rx="11.400" ry="10.500" fill="#2f4e7a" stroke="#1d3353" stroke-width="1"/><path d="M12 0.700C5 5 5 17 12 21.300C19 17 19 5 12 0.700Z" fill="#8fb2df"/><path d="M1.700 11H22.300M3.500 5.500H20.500M3.500 16.500H20.500" stroke="#dfe9f7" stroke-width="1.500"/><path d="M12 0.700V21.300" stroke="#dfe9f7" stroke-width="1"/><rect x="8.500" y="7" width="7" height="3" fill="#2f4e7a"/><rect x="8.500" y="12" width="7" height="3.300" fill="#2f4e7a"/><rect x="14.4" y="14.6" width="9.200" height="9.200" rx="1.800" fill="#5b9a52" stroke="#3f7f3a" stroke-width="0.6"/><path d="M19.0 16.2V22.2M16.0 19.2H22.0" stroke="#fff" stroke-width="1.9"/></svg>
<svg style="position:absolute;left:1211px;top:97.6px;" width="24" height="24" viewBox="0 0 24 24"><ellipse cx="12" cy="11" rx="11.400" ry="10.500" fill="#f2f6fc" stroke="#6f9be0" stroke-width="0.900"/><path d="M1.700 11H22.300M3.500 5.500H20.500M3.500 16.500H20.500M12 0.700V21.300M12 0.700C6 5 6 17 12 21.300M12 0.700C18 5 18 17 12 21.300" stroke="#6f9be0" stroke-width="0.800" fill="none"/><path d="M6.500 5L10.500 16.500L15 5L19 5.500" fill="none" stroke="#1f2f42" stroke-width="1.200"/><g fill="#fff" stroke="#1f2f42" stroke-width="0.900"><circle cx="6.500" cy="5" r="1.400"/><circle cx="15" cy="5" r="1.400"/><circle cx="19.300" cy="5.300" r="1.400"/><circle cx="10.500" cy="16.800" r="1.500"/></g><rect x="14.4" y="14.6" width="9.200" height="9.200" rx="1.800" fill="#5b9a52" stroke="#3f7f3a" stroke-width="0.6"/><path d="M19.0 16.2V22.2M16.0 19.2H22.0" stroke="#fff" stroke-width="1.9"/></svg>
<svg style="position:absolute;left:1241px;top:108.3px;" width="8" height="5" viewBox="0 0 8 5"><path d="M0 0H8L4 4.5Z" fill="#6a6a6a"/></svg>
<svg style="position:absolute;left:1256px;top:97.6px;" width="24" height="24" viewBox="0 0 24 24"><path d="M3 2.500L9 18L14.500 3.500L21.500 3" fill="none" stroke="#2a3f55" stroke-width="1.300"/><g fill="#fff" stroke="#2a3f55" stroke-width="0.900"><path d="M3 0.800L4.700 2.500L3 4.200L1.300 2.500Z"/><path d="M14.500 1.500L16.200 3.200L14.500 4.900L12.800 3.200Z"/><path d="M21.200 1.300L22.900 3L21.200 4.700L19.500 3Z"/><circle cx="9" cy="18.300" r="1.700"/></g><rect x="14.400" y="14.600" width="9.200" height="9.200" rx="1.800" fill="#c4a000"/><path d="M19 16.400V22M16.600 17.800L21.400 20.600M16.600 20.600L21.400 17.800" stroke="#fff" stroke-width="0.900"/></svg>
<svg style="position:absolute;left:1286px;top:108.3px;" width="8" height="5" viewBox="0 0 8 5"><path d="M0 0H8L4 4.5Z" fill="#6a6a6a"/></svg>
<div style="position:absolute;left:0px;top:131px;width:1355px;height:636px;background:#f0f0f0"></div>
<div class="t" style="left:7.00px;top:134.02px;font-size:12px;line-height:1;color:#000;letter-spacing:0.000px;">Browser</div>
<div style="position:absolute;left:12px;top:158px;width:12px;height:11px;background:#f4f4f4;border:1px solid #8a8a8a"></div>
<div style="position:absolute;left:21px;top:163px;width:4px;height:7px;background:#4f8a4f;border-radius:2px"></div>
<div style="position:absolute;left:2.5px;top:180px;width:294px;height:345.5px;background:#fff;border:1px solid #c4c4c4"></div>
<div style="position:absolute;left:3px;top:415px;width:18px;height:18px;background:#e6e6e6"></div>
<div style="position:absolute;left:2.5px;top:525.5px;width:294px;height:16px;background:#f0f0f0;border:1px solid #d6d6d6"></div>
<svg style="position:absolute;left:6px;top:529px;" width="6" height="9" viewBox="0 0 6 9"><path d="M5.500 0.500L0.500 4.500L5.500 8.500Z" fill="#555"/></svg>
<div style="position:absolute;left:17px;top:526px;width:1px;height:15px;background:#c9c9c9"></div>
<div class="t" style="left:7.00px;top:552.02px;font-size:12px;line-height:1;color:#000;letter-spacing:0.000px;">Layers</div>
<svg style="position:absolute;left:10px;top:573px;" width="14" height="12" viewBox="0 0 14 12"><path d="M1 4L9 1L13 5L5 9Z" fill="#d9534a"/><path d="M1 6L9 3L13 7L5 11Z" fill="#e8b04a"/><path d="M1 8L9 5L13 9L5 12Z" fill="#5b8fd0" fill-opacity="0.7"/></svg>
<div style="position:absolute;left:2.5px;top:598px;width:294px;height:168.5px;background:#fff;border:1px solid #c4c4c4"></div>
<div style="position:absolute;left:303px;top:131px;width:798px;height:635.5px;background:#fff;border:1px solid #b8b8b8;border-top:none"></div>
<div class="t" style="left:1112.00px;top:136.02px;font-size:12px;line-height:1;color:#000;letter-spacing:0.000px;">Processing Toolbox</div>
<div style="position:absolute;left:1107.5px;top:150px;width:245.5px;height:616.5px;background:#fff;border:1px solid #c4c4c4"></div>
<svg style="position:absolute;left:1340px;top:134px;" width="12" height="12" viewBox="0 0 12 12"><rect x="0.500" y="0.500" width="11" height="11" rx="2" fill="#f4f4f4" stroke="#777" stroke-width="0.800"/><path d="M3 3L9 9M9 3L3 9" stroke="#222" stroke-width="1.600"/></svg>
<div style="position:absolute;left:0px;top:767px;width:1355px;height:27.5px;background:#f0f0f0"></div>
<div style="position:absolute;left:0px;top:794.5px;width:1355px;height:3.5px;background:#cfcfcf"></div>
<div class="edit" style="position:absolute;left:6.3px;top:770px;width:199.5px;height:22px;"></div>
<svg style="position:absolute;left:14px;top:774px;" width="13" height="13" viewBox="0 0 13 13"><circle cx="5" cy="5" r="3.900" fill="none" stroke="#8c8c8c" stroke-width="1.200"/><path d="M7.800 7.800L12 12" stroke="#8c8c8c" stroke-width="1.500"/></svg>
<div class="t" style="left:34.40px;top:776.52px;font-size:11px;line-height:1;color:#7b7b7b;letter-spacing:0.084px;">Type to locate (Ctrl+K)</div>
<div class="t" style="left:215.00px;top:776.52px;font-size:11px;line-height:1;color:#000;letter-spacing:-0.133px;">1 legend entries removed.</div>
<div class="t" style="left:544.60px;top:776.52px;font-size:11px;line-height:1;color:#000;letter-spacing:-0.049px;">Coordinate</div>
<div class="edit" style="position:absolute;left:601.5px;top:770px;width:83px;height:22px;"></div>
<div class="t" style="left:612.80px;top:776.52px;font-size:11px;line-height:1;color:#000;letter-spacing:0.303px;">34.7,-137.5</div>
<svg style="position:absolute;left:688px;top:771px;" width="18" height="19" viewBox="0 0 18 19"><g transform="rotate(-38 9 10)"><rect x="4.300" y="2.500" width="9.500" height="15" rx="4.500" fill="#fff" stroke="#111" stroke-width="1.500"/><path d="M4.500 9.500H13.500" stroke="#111" stroke-width="1.400"/><path d="M7 3.500V9M9 3V9M11 3.500V9" stroke="#111" stroke-width="1.300"/><circle cx="9" cy="13.300" r="1.500" fill="none" stroke="#111" stroke-width="1.100"/></g><path d="M14.500 3L16.500 1.500M1 11.500L2.500 11" stroke="#333" stroke-width="0.900"/></svg>
<div class="t" style="left:717.70px;top:776.52px;font-size:11px;line-height:1;color:#000;letter-spacing:-0.560px;">Scale</div>
<div class="combo" style="position:absolute;left:746.3px;top:770px;width:80.3px;height:22px;"></div>
<div style="position:absolute;left:747.3px;top:771px;width:59px;height:20px;background:#fff;border-radius:2px 0 0 2px"></div>
<div style="position:absolute;left:806.5px;top:771px;width:1px;height:20px;background:#c8c8c8"></div>
<div class="t" style="left:749.60px;top:776.52px;font-size:11px;line-height:1;color:#000;letter-spacing:-0.172px;">198478528</div>
<div class="ad" style="position:absolute;left:811.6px;top:779px;width:8px;height:4px;"></div>
<svg style="position:absolute;left:838px;top:773px;" width="15" height="17" viewBox="0 0 15 17"><path d="M4 8V5.500a3.500 3.500 0 0 1 7 0V8" fill="none" stroke="#9a9a9a" stroke-width="1.800"/><rect x="1.500" y="7.500" width="12" height="8.500" rx="1.500" fill="#6a6a6a"/></svg>
<div class="t" style="left:859.30px;top:776.52px;font-size:11px;line-height:1;color:#000;letter-spacing:-0.107px;">Magnifier</div>
<div class="edit" style="position:absolute;left:907.2px;top:771px;width:87.6px;height:20px;"></div>
<div style="position:absolute;left:980.5px;top:772px;width:1px;height:17.5px;background:#c8c8c8"></div>
<div class="t" style="left:912.70px;top:776.52px;font-size:11px;line-height:1;color:#000;letter-spacing:0.150px;">100%</div>
<div class="au" style="position:absolute;left:983.5px;top:775px;width:8px;height:4px;"></div>
<div class="ad" style="position:absolute;left:983.5px;top:782.5px;width:8px;height:4px;"></div>
<div class="t" style="left:1003.60px;top:776.52px;font-size:11px;line-height:1;color:#000;letter-spacing:0.129px;">Rotation</div>
<div class="edit" style="position:absolute;left:1054px;top:771px;width:83.8px;height:20px;"></div>
<div style="position:absolute;left:1123.5px;top:772px;width:1px;height:17.5px;background:#c8c8c8"></div>
<div class="t" style="left:1058.30px;top:776.52px;font-size:11px;line-height:1;color:#000;letter-spacing:0.710px;">0.0 °</div>
<div class="au" style="position:absolute;left:1126.5px;top:775px;width:8px;height:4px;"></div>
<div class="ad" style="position:absolute;left:1126.5px;top:782.5px;width:8px;height:4px;"></div>
<div style="position:absolute;left:1144.4px;top:775.5px;width:13px;height:13px;background:#fff;border:1px solid #8e8e8e"></div>
<svg style="position:absolute;left:1146px;top:777px;" width="10" height="10" viewBox="0 0 10 10"><path d="M1.500 5L4 8.500L8.500 1" fill="none" stroke="#111" stroke-width="1.600"/></svg>
<div class="t" style="left:1162.10px;top:776.52px;font-size:11px;line-height:1;color:#000;letter-spacing:-0.058px;">Render</div>
<svg style="position:absolute;left:1215px;top:774px;" width="16" height="15" viewBox="0 0 16 15"><path d="M1 8.500C1 3 15 3 15 8.500C15 11 12 14 8 14C4 14 1 11 1 8.500ZM2 6H14M1 8.500H15M2.500 11.500H13.500M8 2.500V14M5 3.500C3.500 7 4 11 6 13.800M11 3.500C12.500 7 12 11 10 13.800" fill="none" stroke="#6e6e6e" stroke-width="0.800"/><path d="M4 3L8 0.800L12 3" fill="none" stroke="#6e6e6e" stroke-width="0.800"/></svg>
<div class="t" style="left:1234.00px;top:776.52px;font-size:11px;line-height:1;color:#000;letter-spacing:-0.488px;">EPSG:4326</div>
<svg style="position:absolute;left:1307px;top:774px;" width="17" height="15" viewBox="0 0 17 15"><ellipse cx="8" cy="6.500" rx="7.800" ry="6.300" fill="#5f5f5f"/><path d="M10 11.500L15 14.500L13 9.500Z" fill="#5f5f5f"/><circle cx="4.300" cy="6.500" r="1.200" fill="#fff"/><circle cx="8" cy="6.500" r="1.200" fill="#fff"/><circle cx="11.700" cy="6.500" r="1.200" fill="#fff"/></svg>
<svg style="position:absolute;left:1341px;top:782px;" width="11" height="11" viewBox="0 0 11 11"><rect x="9" y="0" width="1.200" height="1.200" fill="#b5b5b5"/><rect x="6" y="3" width="1.200" height="1.200" fill="#b5b5b5"/><rect x="9" y="3" width="1.200" height="1.200" fill="#b5b5b5"/><rect x="3" y="6" width="1.200" height="1.200" fill="#b5b5b5"/><rect x="6" y="6" width="1.200" height="1.200" fill="#b5b5b5"/><rect x="9" y="6" width="1.200" height="1.200" fill="#b5b5b5"/><rect x="0" y="9" width="1.200" height="1.200" fill="#b5b5b5"/><rect x="3" y="9" width="1.200" height="1.200" fill="#b5b5b5"/><rect x="6" y="9" width="1.200" height="1.200" fill="#b5b5b5"/><rect x="9" y="9" width="1.200" height="1.200" fill="#b5b5b5"/></svg>
<div style="position:absolute;left:20px;top:93px;width:627px;height:628px;background:#f0f0f0;border:1px solid #8f8f8f;box-shadow:0 2px 10px rgba(0,0,0,0.34)"></div>
<div style="position:absolute;left:21px;top:94px;width:625px;height:30px;background:#fff"></div>
<svg style="position:absolute;left:29.3px;top:100px;" width="16" height="16" viewBox="0 0 16 16"><defs><linearGradient id="lgA2" x1="0" y1="0" x2="0" y2="1"><stop offset="0" stop-color="#8cad1a"/><stop offset="1" stop-color="#4c9229"/></linearGradient>
<linearGradient id="lgB2" x1="0" y1="0" x2="1" y2="1"><stop offset="0" stop-color="#ee7913"/><stop offset="0.3" stop-color="#f5c828"/><stop offset="0.5" stop-color="#7fb13a"/><stop offset="1" stop-color="#3f8f2a"/></linearGradient></defs>
<circle cx="7.8" cy="7.7" r="5.9" fill="none" stroke="url(#lgA2)" stroke-width="3.1"/>
<path d="M7.6 7.4 L14.6 14.2" stroke="#fff" stroke-width="5" stroke-linecap="butt"/>
<path d="M7.4 7.2 L14.3 13.9" stroke="url(#lgB2)" stroke-width="2.9" stroke-linecap="round"/></svg>
<div class="t" style="left:50.20px;top:103.02px;font-size:12px;line-height:1;color:#999;letter-spacing:0.009px;">Warp (reproject)</div>
<svg style="position:absolute;left:625.5px;top:102.5px;" width="11" height="11" viewBox="0 0 11 11"><path d="M0.500 0.500L10.500 10.500M10.500 0.500L0.500 10.500" stroke="#5a5a5a" stroke-width="1"/></svg>
<div style="position:absolute;left:32.3px;top:158px;width:602.6px;height:476px;background:#f0f0f0;border:1px solid #b9b9b9"></div>
<div style="position:absolute;left:111.6px;top:137.5px;width:40px;height:21px;background:linear-gradient(#f6f6f6,#e9e9e9);border:1px solid #c4c4c4;border-bottom:none;border-radius:3px 3px 0 0"></div>
<div style="position:absolute;left:32.3px;top:135.5px;width:79.8px;height:23.5px;background:#fff;border:1px solid #c4c4c4;border-bottom:none;border-radius:3px 3px 0 0"></div>
<div class="t" style="left:43.20px;top:142.52px;font-size:11px;line-height:1;color:#000;letter-spacing:-0.074px;">Parameters</div>
<div class="t" style="left:122.10px;top:143.52px;font-size:11px;line-height:1;color:#000;letter-spacing:0.065px;">Log</div>
<div style="position:absolute;left:619px;top:159px;width:15.4px;height:474.5px;background:linear-gradient(90deg,#fcfcfc,#f3f3f3);border-left:1px solid #cdcdcd"></div>
<div style="position:absolute;left:620.9px;top:159px;width:13.5px;height:15px;background:#f2f2f2;border-bottom:1px solid #d2d2d2"></div>
<div class="au" style="position:absolute;left:623.5px;top:164.5px;width:8px;height:4px;"></div>
<div style="position:absolute;left:620.9px;top:617px;width:13.5px;height:1px;background:#cfcfcf"></div>
<div style="position:absolute;left:620.9px;top:620.5px;width:13.5px;height:1px;background:#cfcfcf"></div>
<div class="ad" style="position:absolute;left:623.5px;top:624.5px;width:8px;height:4px;"></div>
<div class="t" style="left:37.80px;top:165.52px;font-size:11px;line-height:1;color:#000;letter-spacing:0.141px;">Input layer</div>
<div class="combo" style="position:absolute;left:38.3px;top:183px;width:547.1px;height:24px;"></div>
<div class="t" style="left:42.40px;top:190.52px;font-size:11px;line-height:1;color:#000;letter-spacing:-0.021px;">C:/Data/GEOG_2210_Data/world_lat_long_raster/World_Hypsometric.tif</div>
<div class="ad" style="position:absolute;left:569.7px;top:193.5px;width:8px;height:4px;"></div>
<div class="btn" style="position:absolute;left:592px;top:183px;width:23px;height:20px;"></div>
<div class="t" style="left:599.60px;top:188.52px;font-size:11px;line-height:1;color:#000;letter-spacing:-0.091px;">...</div>
<div class="t" style="left:37.80px;top:214.52px;font-size:11px;line-height:1;color:#000;letter-spacing:-0.198px;">Source CRS [optional]</div>
<div class="combo" style="position:absolute;left:38.3px;top:232px;width:546.4px;height:23px;"></div>
<div class="t" style="left:42.30px;top:238.52px;font-size:11px;line-height:1;color:#000;letter-spacing:-0.346px;">Project CRS: EPSG:4326 - WGS 84</div>
<div class="ad" style="position:absolute;left:569.7px;top:241.2px;width:8px;height:4px;"></div>
<div class="t" style="left:37.80px;top:262.52px;font-size:11px;line-height:1;color:#000;letter-spacing:-0.039px;">Target CRS [optional]</div>
<div class="combo" style="position:absolute;left:38.3px;top:280px;width:546.4px;height:23px;"></div>
<div class="t" style="left:42.30px;top:286.52px;font-size:11px;line-height:1;color:#000;letter-spacing:-0.312px;">EPSG:3005 - NAD83 / BC Albers</div>
<div class="ad" style="position:absolute;left:569.7px;top:289.2px;width:8px;height:4px;"></div>
<div class="btn" style="position:absolute;left:591px;top:232px;width:24px;height:23px;"></div>
<svg style="position:absolute;left:595px;top:235px;" width="17" height="17" viewBox="0 0 17 17"><path d="M1 9C1 4 15 4 15 9C15 12 12 15 8 15C4 15 1 12 1 9Z" fill="#cfe3f6" stroke="#8fa9c9" stroke-width="0.700"/><path d="M1.500 7H14.500M1 9.500H15M2.500 12H13.500M8 4.500V15M5 5C4 8 4.500 12 6 14.500M11 5C12 8 11.500 12 10 14.500" fill="none" stroke="#8fb0d8" stroke-width="0.600"/><path d="M2 6L8 1L14 6C10 4.500 6 4.500 2 6Z" fill="#bdbdbd" stroke="#8e8e8e" stroke-width="0.600"/><rect x="9" y="9" width="7.500" height="7.500" rx="1" fill="#c4a000"/><path d="M10.800 14.800L14.800 10.800" stroke="#fff" stroke-width="1.500"/></svg>
<div class="btn" style="position:absolute;left:591px;top:280px;width:24px;height:23px;"></div>
<svg style="position:absolute;left:595px;top:283px;" width="17" height="17" viewBox="0 0 17 17"><path d="M1 9C1 4 15 4 15 9C15 12 12 15 8 15C4 15 1 12 1 9Z" fill="#cfe3f6" stroke="#8fa9c9" stroke-width="0.700"/><path d="M1.500 7H14.500M1 9.500H15M2.500 12H13.500M8 4.500V15M5 5C4 8 4.500 12 6 14.500M11 5C12 8 11.500 12 10 14.500" fill="none" stroke="#8fb0d8" stroke-width="0.600"/><path d="M2 6L8 1L14 6C10 4.500 6 4.500 2 6Z" fill="#bdbdbd" stroke="#8e8e8e" stroke-width="0.600"/><rect x="9" y="9" width="7.500" height="7.500" rx="1" fill="#c4a000"/><path d="M10.800 14.800L14.800 10.800" stroke="#fff" stroke-width="1.500"/></svg>
<div class="t" style="left:37.80px;top:310.52px;font-size:11px;line-height:1;color:#000;letter-spacing:-0.199px;">Resampling method to use</div>
<div class="combo" style="position:absolute;left:38.3px;top:328.3px;width:576.1px;height:21.3px;"></div>
<div class="t" style="left:42.30px;top:334.52px;font-size:11px;line-height:1;color:#000;letter-spacing:-0.072px;">Nearest Neighbour</div>
<div class="ad" style="position:absolute;left:599.5px;top:337px;width:8px;height:4px;"></div>
<div class="t" style="left:37.80px;top:357.52px;font-size:11px;line-height:1;color:#000;letter-spacing:0.054px;">Nodata value for output bands [optional]</div>
<div class="edit" style="position:absolute;left:38.3px;top:376.2px;width:576.1px;height:19.6px;"></div>
<div style="position:absolute;left:600.6px;top:377.2px;width:13px;height:17.6px;background:linear-gradient(#fbfbfb,#e9e9e9);border-left:1px solid #cfcfcf;border-radius:0 3px 3px 0"></div>
<div style="position:absolute;left:603px;top:380.7px;width:8px;height:4px;border-left:4px solid transparent;border-right:4px solid transparent;border-bottom:4px solid #555;width:0;height:0"></div>
<div style="position:absolute;left:603px;top:387.7px;width:8px;height:4px;border-left:4px solid transparent;border-right:4px solid transparent;border-top:4px solid #9a9a9a;width:0;height:0"></div>
<div class="t" style="left:42.30px;top:381.52px;font-size:11px;line-height:1;color:#000;letter-spacing:0.188px;">Not set</div>
<div class="t" style="left:37.80px;top:404.52px;font-size:11px;line-height:1;color:#000;letter-spacing:0.037px;">Output file resolution in target georeferenced units [optional]</div>
<div class="edit" style="position:absolute;left:38.3px;top:423.3px;width:576.1px;height:19.5px;"></div>
<div style="position:absolute;left:600.6px;top:424.3px;width:13px;height:17.5px;background:linear-gradient(#fbfbfb,#e9e9e9);border-left:1px solid #cfcfcf;border-radius:0 3px 3px 0"></div>
<div style="position:absolute;left:603px;top:427.8px;width:8px;height:4px;border-left:4px solid transparent;border-right:4px solid transparent;border-bottom:4px solid #555;width:0;height:0"></div>
<div style="position:absolute;left:603px;top:434.8px;width:8px;height:4px;border-left:4px solid transparent;border-right:4px solid transparent;border-top:4px solid #9a9a9a;width:0;height:0"></div>
<div class="t" style="left:43.20px;top:427.52px;font-size:11px;line-height:1;color:#000;letter-spacing:-0.024px;">5000.000000</div>
<svg style="position:absolute;left:42.5px;top:453.5px;" width="8" height="11" viewBox="0 0 8 11"><path d="M0.500 0.500L7.500 5.500L0.500 10.500Z" fill="#4a4a4a" stroke="#222" stroke-width="0.600"/></svg>
<div class="t" style="left:59.30px;top:452.27px;font-size:11.5px;line-height:1;color:#000;font-weight:bold;letter-spacing:0.354px;">Advanced parameters</div>
<div class="t" style="left:37.80px;top:475.52px;font-size:11px;line-height:1;color:#000;letter-spacing:-0.004px;">Reprojected</div>
<div class="edit" style="position:absolute;left:38.2px;top:493px;width:547px;height:21px;"></div>
<div class="t" style="left:40.40px;top:498.52px;font-size:11px;line-height:1;color:#000;letter-spacing:-0.092px;">C:/Data/GEOG_2210_Data/BC_Albers/World_Hypsometric_3005.tif</div>
<div class="btn" style="position:absolute;left:592px;top:493px;width:23px;height:21px;"></div>
<div class="t" style="left:599.60px;top:498.52px;font-size:11px;line-height:1;color:#000;letter-spacing:-0.091px;">...</div>
<div style="position:absolute;left:38.3px;top:522.5px;width:13.4px;height:13px;background:#fff;border:1px solid #8e8e8e"></div>
<svg style="position:absolute;left:40px;top:524px;" width="10" height="10" viewBox="0 0 10 10"><path d="M1.500 5L4 8.500L8.500 1" fill="none" stroke="#111" stroke-width="1.600"/></svg>
<div class="t" style="left:56.50px;top:524.52px;font-size:11px;line-height:1;color:#000;letter-spacing:0.018px;">Open output file after running algorithm</div>
<div class="t" style="left:37.80px;top:546.52px;font-size:11px;line-height:1;color:#000;letter-spacing:-0.461px;">GDAL/OGR console call</div>
<div style="position:absolute;left:38.2px;top:564.3px;width:576.3px;height:69.2px;background:#fff;border:1px solid #adadad;border-bottom:none"></div>
<div class="t" style="left:42.70px;top:570.52px;font-size:11px;line-height:1;color:#000;letter-spacing:-0.117px;">gdalwarp -s_srs EPSG:4326 -t_srs EPSG:3005 -r near -of GTiff C:/Data/GEOG_2210_Data/world_lat_long_raster/</div>
<div class="t" style="left:42.70px;top:583.52px;font-size:11px;line-height:1;color:#000;letter-spacing:-0.076px;">World_Hypsometric.tif C:/Data/GEOG_2210_Data/BC_Albers/World_Hypsometric_3005.tif</div>
<div class="edit" style="position:absolute;left:32.3px;top:661px;width:516.1px;height:21px;"></div>
<div class="t" style="left:282.00px;top:666.52px;font-size:11px;line-height:1;color:#000;letter-spacing:0.000px;">0%</div>
<div class="btn" style="position:absolute;left:555.1px;top:661px;width:79.3px;height:21px;background:#f2f2f2;border-color:#c8c8c8"></div>
<div class="t" style="left:578.50px;top:666.52px;font-size:11px;line-height:1;color:#8c8c8c;letter-spacing:-0.252px;">Cancel</div>
<div class="btn" style="position:absolute;left:32.3px;top:688.3px;width:119.3px;height:21px;"></div>
<div class="t" style="left:35.40px;top:693.52px;font-size:11px;line-height:1;color:#000;letter-spacing:-0.237px;">Run as Batch Process...</div>
<div class="btn" style="position:absolute;left:383.2px;top:688.3px;width:79.8px;height:21px;"></div>
<div class="t" style="left:412.30px;top:693.52px;font-size:11px;line-height:1;color:#000;letter-spacing:0.101px;">Run</div>
<div class="btn" style="position:absolute;left:469.8px;top:688.3px;width:78.6px;height:21px;"></div>
<div class="t" style="left:495.20px;top:693.52px;font-size:11px;line-height:1;color:#000;letter-spacing:-0.284px;">Close</div>
<div class="btn" style="position:absolute;left:555.1px;top:688.3px;width:79.3px;height:21px;"></div>
<div class="t" style="left:583.00px;top:693.52px;font-size:11px;line-height:1;color:#000;letter-spacing:-0.112px;">Help</div>
<div style="position:absolute;left:680px;top:132px;width:663.3px;height:552.8px;background:#fff;border:3px solid #f406dc;box-shadow:0 3px 10px rgba(0,0,0,0.25)"></div>
<div class="t" style="left:1112.00px;top:136.02px;font-size:12px;line-height:1;color:#000;letter-spacing:0.000px;">Processing Toolbox</div>
<div style="position:absolute;left:683px;top:138px;width:655px;height:544px;background:#202020"></div>
<div style="position:absolute;left:1338px;top:138px;width:2px;height:544px;background:linear-gradient(90deg,#3d6f8a,#e8e8e8)"></div>
<div style="position:absolute;left:683px;top:138px;width:655px;height:31px;background:#0f3266"></div>
<svg style="position:absolute;left:692px;top:145px;" width="16" height="16" viewBox="0 0 16 16"><defs><linearGradient id="lgA3" x1="0" y1="0" x2="0" y2="1"><stop offset="0" stop-color="#8cad1a"/><stop offset="1" stop-color="#4c9229"/></linearGradient>
<linearGradient id="lgB3" x1="0" y1="0" x2="1" y2="1"><stop offset="0" stop-color="#ee7913"/><stop offset="0.3" stop-color="#f5c828"/><stop offset="0.5" stop-color="#7fb13a"/><stop offset="1" stop-color="#3f8f2a"/></linearGradient></defs>
<circle cx="7.8" cy="7.7" r="5.9" fill="none" stroke="url(#lgA3)" stroke-width="3.1"/>
<path d="M7.6 7.4 L14.6 14.2" stroke="#fff" stroke-width="5" stroke-linecap="butt"/>
<path d="M7.4 7.2 L14.3 13.9" stroke="url(#lgB3)" stroke-width="2.9" stroke-linecap="round"/></svg>
<div class="t" style="left:713.20px;top:148.02px;font-size:12px;line-height:1;color:#fff;letter-spacing:-0.294px;">Save file</div>
<svg style="position:absolute;left:1316.5px;top:147.5px;" width="11" height="11" viewBox="0 0 11 11"><path d="M0.500 0.500L10.500 10.500M10.500 0.500L0.500 10.500" stroke="#fff" stroke-width="1.300"/></svg>
<div style="position:absolute;left:683px;top:169px;width:655px;height:41.5px;background:#191919"></div>
<svg style="position:absolute;left:696px;top:182px;" width="15" height="14" viewBox="0 0 15 14"><path d="M13.500 7H2M7 1.500L1.500 7L7 12.500" fill="none" stroke="#fff" stroke-width="1.900"/></svg>
<svg style="position:absolute;left:726px;top:182px;" width="15" height="14" viewBox="0 0 15 14"><path d="M1.500 7H13M8 1.500L13.500 7L8 12.500" fill="none" stroke="#7c7c7c" stroke-width="1.700"/></svg>
<svg style="position:absolute;left:752px;top:185px;" width="9" height="7" viewBox="0 0 9 7"><path d="M1 1.500L4.500 5L8 1.500" fill="none" stroke="#fff" stroke-width="1.600"/></svg>
<svg style="position:absolute;left:770px;top:181px;" width="14" height="16" viewBox="0 0 14 16"><path d="M7 15V2.500M1.500 8L7 2L12.500 8" fill="none" stroke="#fff" stroke-width="1.900"/></svg>
<div style="position:absolute;left:790.3px;top:174.3px;width:320.7px;height:29.4px;background:#191919;border:1px solid #626262"></div>
<svg style="position:absolute;left:795px;top:180px;" width="13" height="16" viewBox="0 0 13 16"><path d="M0 0.500H12V15.500H0Z" fill="#ffe285"/><path d="M9 15.500V10H12V15.500Z" fill="#f5cf55"/></svg>
<div class="t" style="left:814.00px;top:183.02px;font-size:12px;line-height:1;color:#bdbdbd;letter-spacing:0.000px;">«</div>
<div class="t" style="left:830.20px;top:183.02px;font-size:12px;line-height:1;color:#fff;letter-spacing:-0.910px;">GEOG_2210_Data</div>
<svg style="position:absolute;left:927px;top:186px;" width="7" height="9" viewBox="0 0 7 9"><path d="M1.500 1L5 4.500L1.500 8" fill="none" stroke="#9a9a9a" stroke-width="1.300"/></svg>
<div class="t" style="left:942.10px;top:183.02px;font-size:12px;line-height:1;color:#fff;letter-spacing:-0.422px;">BC_Albers</div>
<svg style="position:absolute;left:1056px;top:186px;" width="12" height="8" viewBox="0 0 12 8"><path d="M1 1.500L6 6.500L11 1.500" fill="none" stroke="#c9c9c9" stroke-width="1.500"/></svg>
<div style="position:absolute;left:1077.4px;top:175.3px;width:1px;height:27.4px;background:#262626"></div>
<svg style="position:absolute;left:1088px;top:183px;" width="13" height="13" viewBox="0 0 13 13"><path d="M10.800 4.300A5 5 0 1 1 6.500 1.500" fill="none" stroke="#a8a8a8" stroke-width="1.400"/><path d="M6.500 1.500V5.500M6.500 1.600H10.500" fill="none" stroke="#a8a8a8" stroke-width="1.300"/></svg>
<div style="position:absolute;left:1123.1px;top:174.3px;width:202.1px;height:29.4px;background:#191919;border:1px solid #626262"></div>
<svg style="position:absolute;left:1137px;top:182px;" width="14" height="14" viewBox="0 0 14 14"><circle cx="8.500" cy="5.500" r="4.200" fill="none" stroke="#9a9a9a" stroke-width="1.200"/><path d="M5.500 8.500L1 13" stroke="#9a9a9a" stroke-width="1.300"/></svg>
<div class="t" style="left:1164.20px;top:183.02px;font-size:12px;line-height:1;color:#8c8c8c;letter-spacing:-0.456px;">Search BC_Albers</div>
<div style="position:absolute;left:683px;top:210.5px;width:655px;height:30.5px;background:#202020"></div>
<div class="t" style="left:702.40px;top:220.02px;font-size:12px;line-height:1;color:#fff;letter-spacing:-0.103px;">Organise</div>
<svg style="position:absolute;left:754.5px;top:224px;" width="9" height="5" viewBox="0 0 9 5"><path d="M0 0H9L4.500 5Z" fill="#c4c4c4"/></svg>
<div class="t" style="left:793.40px;top:220.02px;font-size:12px;line-height:1;color:#fff;letter-spacing:0.158px;">New folder</div>
<svg style="position:absolute;left:1242px;top:219px;" width="18" height="14" viewBox="0 0 18 14"><rect x="0.500" y="0" width="4.500" height="13.500" fill="#e6e6e6"/><rect x="2" y="2" width="1.500" height="1.500" fill="#555"/><rect x="2" y="6" width="1.500" height="1.500" fill="#3a76d0"/><rect x="2" y="10" width="1.500" height="1.500" fill="#c33"/><path d="M7 2.500H10.500M12.500 2.500H16.500M7 6.500H10.500M12.500 6.500H16.500M7 10.500H10.500M12.500 10.500H16.500" stroke="#b4b4b4" stroke-width="1"/></svg>
<svg style="position:absolute;left:1268px;top:224px;" width="9" height="5" viewBox="0 0 9 5"><path d="M0 0H9L4.500 5Z" fill="#e0e0e0"/></svg>
<svg style="position:absolute;left:1306px;top:217.8px;" width="16" height="16" viewBox="0 0 16 16"><circle cx="8" cy="8" r="7.800" fill="#0a64c8"/><text x="4.700" y="12.300" font-weight="bold" font-size="12" fill="#fff">?</text></svg>
<div style="position:absolute;left:683px;top:241px;width:170px;height:322.5px;background:#191919"></div>
<div style="position:absolute;left:853px;top:241px;width:1px;height:322.5px;background:#2b2b2b"></div>
<div style="position:absolute;left:854px;top:241px;width:484px;height:322.5px;background:#202020"></div>
<svg style="position:absolute;left:838px;top:247.5px;" width="9" height="7" viewBox="0 0 9 7"><path d="M1 5.500L4.500 2L8 5.500" fill="none" stroke="#8a8a8a" stroke-width="1.900"/></svg>
<svg style="position:absolute;left:838px;top:552.5px;" width="9" height="7" viewBox="0 0 9 7"><path d="M1 1.500L4.500 5L8 1.500" fill="none" stroke="#8a8a8a" stroke-width="1.900"/></svg>
<div style="position:absolute;left:834.8px;top:369.2px;width:15.2px;height:177.3px;background:#4d4d4d"></div>
<div style="position:absolute;left:683px;top:419px;width:149.8px;height:22px;background:#333333"></div>
<div class="t" style="left:872.70px;top:249.02px;font-size:12px;line-height:1;color:#fff;letter-spacing:0.121px;">Name</div>
<svg style="position:absolute;left:991.5px;top:241.5px;" width="9" height="5" viewBox="0 0 9 5"><path d="M0.500 4.500L4.500 0.800L8.500 4.500" fill="none" stroke="#9a9a9a" stroke-width="1"/></svg>
<div style="position:absolute;left:1126.5px;top:242px;width:1px;height:24.5px;background:#5a5a5a"></div>
<div style="position:absolute;left:1270.5px;top:242px;width:1px;height:24.5px;background:#5a5a5a"></div>
<div class="t" style="left:1133.00px;top:249.02px;font-size:12px;line-height:1;color:#fff;letter-spacing:0.111px;">Date modified</div>
<div class="t" style="left:1277.50px;top:249.02px;font-size:12px;line-height:1;color:#fff;letter-spacing:-0.479px;">Type</div>
<div class="t" style="left:1020.30px;top:284.02px;font-size:12px;line-height:1;color:#fff;letter-spacing:-0.001px;">No items match your search.</div>
<div style="position:absolute;left:854px;top:548px;width:484px;height:15.5px;background:#171717"></div>
<svg style="position:absolute;left:859.5px;top:551.5px;" width="7" height="9" viewBox="0 0 7 9"><path d="M5.500 1L2 4.500L5.500 8" fill="none" stroke="#8a8a8a" stroke-width="1.900"/></svg>
<svg style="position:absolute;left:1325.5px;top:551.5px;" width="7" height="9" viewBox="0 0 7 9"><path d="M1.500 1L5 4.500L1.500 8" fill="none" stroke="#8a8a8a" stroke-width="1.900"/></svg>
<div style="position:absolute;left:871.8px;top:548px;width:345.2px;height:15.5px;background:#4d4d4d"></div>
<div class="t" style="left:729.60px;top:256.02px;font-size:12px;line-height:1;color:#fff;letter-spacing:-0.535px;">This PC</div>
<svg style="position:absolute;left:708px;top:255.0px;" width="17" height="16" viewBox="0 0 17 16"><rect x="0.500" y="0.500" width="15.500" height="10.500" fill="#3cc4f6" stroke="#d6eefb" stroke-width="0.800"/><path d="M2 9.500L14.500 2V9.500Z" fill="#1e9fe0" fill-opacity="0.500"/><rect x="6.500" y="11.500" width="3.500" height="2" fill="#bfc7cc"/><rect x="1.500" y="13.500" width="13.500" height="1.600" fill="#e8edf0"/></svg>
<div class="t" style="left:737.40px;top:280.02px;font-size:12px;line-height:1;color:#fff;letter-spacing:-0.092px;">Desktop</div>
<svg style="position:absolute;left:716px;top:280.0px;" width="17" height="13" viewBox="0 0 17 13"><rect x="0" y="0" width="16.500" height="12" fill="#1f9bf0"/><path d="M0 12L16.500 0V12Z" fill="#1a8ae0" fill-opacity="0.600"/><rect x="1.500" y="10" width="11" height="1" fill="#dff2ff"/><rect x="14" y="10" width="1" height="1" fill="#fff"/></svg>
<div class="t" style="left:737.40px;top:304.02px;font-size:12px;line-height:1;color:#fff;letter-spacing:0.122px;">Documents</div>
<svg style="position:absolute;left:717.5px;top:301.5px;" width="13" height="16" viewBox="0 0 13 16"><path d="M0.500 0.500H9L12.500 4V15.500H0.500Z" fill="#fff" stroke="#b8b8b8" stroke-width="0.700"/><path d="M3 4H7M3 6H10M3 8.500H10M3 11H10M3 13H10" stroke="#4a90d9" stroke-width="0.900"/><rect x="6" y="9.500" width="4" height="2" fill="#4d9e5a"/></svg>
<div class="t" style="left:737.40px;top:328.02px;font-size:12px;line-height:1;color:#fff;letter-spacing:0.076px;">Downloads</div>
<svg style="position:absolute;left:716px;top:325.5px;" width="16" height="16" viewBox="0 0 16 16"><path d="M5.500 0H10.500V7.500H15.500L8 15.500L0.500 7.500H5.500Z" fill="#2196f0"/></svg>
<div class="t" style="left:737.40px;top:352.02px;font-size:12px;line-height:1;color:#fff;letter-spacing:0.334px;">Music</div>
<svg style="position:absolute;left:718px;top:349.0px;" width="12" height="17" viewBox="0 0 12 17"><path d="M5 0.500C6.500 4 11 5 10.500 10C10 8 8 7 6.500 7V13a3 3 0 1 1-1.500-2.600Z" fill="#1e9ff2"/></svg>
<div class="t" style="left:737.40px;top:376.02px;font-size:12px;line-height:1;color:#fff;letter-spacing:-0.097px;">Pictures</div>
<svg style="position:absolute;left:716px;top:376.0px;" width="17" height="13" viewBox="0 0 17 13"><rect x="0.500" y="0.500" width="16" height="12" fill="#fff" stroke="#cfcfcf" stroke-width="0.600"/><rect x="2" y="2" width="13" height="9" fill="#9fd0f2"/><path d="M2 9C5 5.500 9 6.500 15 8.500V11H2Z" fill="#3f7f5a"/><path d="M2 10C6 8.500 10 9.500 15 10V11H2Z" fill="#e9f2f4"/></svg>
<div class="t" style="left:737.40px;top:400.02px;font-size:12px;line-height:1;color:#fff;letter-spacing:-0.161px;">Videos</div>
<svg style="position:absolute;left:717.5px;top:397.5px;" width="13" height="17" viewBox="0 0 13 17"><rect x="0" y="0" width="13" height="17" fill="#3a3a3a"/><rect x="2.500" y="1" width="8" height="6.800" fill="#4a78c8"/><rect x="2.500" y="9" width="8" height="6.800" fill="#3f6fc2"/><path d="M3 6C5 3 7 5 10 2.500V7.500H3Z" fill="#e7c23c"/><path d="M3 14.500C5 11.500 7 13.500 10 11V15.800H3Z" fill="#d65a3a"/><path d="M1 1V16M12 1V16" stroke="#bbb" stroke-width="1" stroke-dasharray="1 1"/></svg>
<div class="t" style="left:737.40px;top:424.02px;font-size:12px;line-height:1;color:#fff;letter-spacing:-0.243px;">Local Disk (C:)</div>
<svg style="position:absolute;left:716px;top:423.0px;" width="16" height="16" viewBox="0 -3 16 16"><path d="M2.500 6.500L4 3.500H12L13.500 6.500Z" fill="#dcdcdc"/><rect x="1" y="6.500" width="14" height="4.500" rx="1" fill="#f2f2f2" stroke="#9a9a9a" stroke-width="0.500"/><rect x="11" y="8" width="2" height="1.300" fill="#3ec23e"/><g fill="#23b6f2"><rect x="0" y="-2.500" width="2.400" height="2.400"/><rect x="3" y="-2.500" width="2.400" height="2.400"/><rect x="0" y="0.500" width="2.400" height="2.400"/><rect x="3" y="0.500" width="2.400" height="2.400"/></g></svg>
<div class="t" style="left:737.40px;top:448.02px;font-size:12px;line-height:1;color:#fff;letter-spacing:-0.102px;">New Volume (D:)</div>
<svg style="position:absolute;left:716px;top:447.0px;" width="16" height="16" viewBox="0 -3 16 16"><path d="M2.500 6.500L4 3.500H12L13.500 6.500Z" fill="#dcdcdc"/><rect x="1" y="6.500" width="14" height="4.500" rx="1" fill="#f2f2f2" stroke="#9a9a9a" stroke-width="0.500"/><rect x="11" y="8" width="2" height="1.300" fill="#3ec23e"/></svg>
<div class="t" style="left:737.40px;top:472.02px;font-size:12px;line-height:1;color:#fff;letter-spacing:-0.168px;">New Volume (E:)</div>
<svg style="position:absolute;left:716px;top:471.0px;" width="16" height="16" viewBox="0 -3 16 16"><path d="M2.500 6.500L4 3.500H12L13.500 6.500Z" fill="#dcdcdc"/><rect x="1" y="6.500" width="14" height="4.500" rx="1" fill="#f2f2f2" stroke="#9a9a9a" stroke-width="0.500"/><rect x="11" y="8" width="2" height="1.300" fill="#3ec23e"/></svg>
<div class="t" style="left:737.40px;top:496.02px;font-size:12px;line-height:1;color:#fff;letter-spacing:-0.120px;">New Volume (F:)</div>
<svg style="position:absolute;left:716px;top:495.0px;" width="16" height="16" viewBox="0 -3 16 16"><path d="M2.500 6.500L4 3.500H12L13.500 6.500Z" fill="#dcdcdc"/><rect x="1" y="6.500" width="14" height="4.500" rx="1" fill="#f2f2f2" stroke="#9a9a9a" stroke-width="0.500"/><rect x="11" y="8" width="2" height="1.300" fill="#3ec23e"/></svg>
<div class="t" style="left:729.60px;top:528.02px;font-size:12px;line-height:1;color:#fff;letter-spacing:0.227px;">Network</div>
<svg style="position:absolute;left:708px;top:524.5px;" width="17" height="18" viewBox="0 0 17 18"><circle cx="10.500" cy="6" r="5.800" fill="#7cc4ee"/><path d="M6.500 3C8.500 1 11 1.500 12 4C10.500 5.500 9 4 6.500 3ZM11 7C13 6.500 15 7.500 15 9C13.500 11 12 10 11 7Z" fill="#d7effc"/><rect x="0.500" y="8" width="11" height="7" fill="#35b8f4" stroke="#d6eefb" stroke-width="0.700"/><rect x="4.500" y="15" width="3" height="1.500" fill="#bfc7cc"/><rect x="2.500" y="16.300" width="7" height="1.200" fill="#e8edf0"/></svg>
<div style="position:absolute;left:683px;top:563.5px;width:655px;height:118.5px;background:#383838"></div>
<div class="t" style="left:750.30px;top:581.02px;font-size:12px;line-height:1;color:#fff;letter-spacing:-0.195px;">File name:</div>
<div style="position:absolute;left:809.2px;top:575.1px;width:522.8px;height:23.1px;background:#383838;border:1px solid #f2f2f2"></div>
<div style="position:absolute;left:815px;top:577.6px;width:134.8px;height:15.6px;background:#3399ff"></div>
<div class="t" style="left:816.00px;top:580.02px;font-size:12px;line-height:1;color:#fff;letter-spacing:-0.203px;">World_Hypsometric_3005</div>
<div style="position:absolute;left:949.3px;top:577.6px;width:1px;height:15.6px;background:#e08a2a"></div>
<svg style="position:absolute;left:1317px;top:583px;" width="11" height="7" viewBox="0 0 11 7"><path d="M1 1L5.500 5.500L10 1" fill="none" stroke="#e0e0e0" stroke-width="1.200"/></svg>
<div class="t" style="left:737.20px;top:606.02px;font-size:12px;line-height:1;color:#fff;letter-spacing:-0.445px;">Save as type:</div>
<div style="position:absolute;left:809.2px;top:600.2px;width:522.8px;height:22.6px;background:#383838;border:1px solid #8a8a8a"></div>
<div class="t" style="left:813.80px;top:606.02px;font-size:12px;line-height:1;color:#fff;letter-spacing:-0.160px;">TIF files (*.tif)</div>
<svg style="position:absolute;left:1317px;top:608px;" width="11" height="7" viewBox="0 0 11 7"><path d="M1 1L5.500 5.500L10 1" fill="none" stroke="#e0e0e0" stroke-width="1.200"/></svg>
<svg style="position:absolute;left:697px;top:655px;" width="10" height="7" viewBox="0 0 10 7"><path d="M1 6L5 1.500L9 6" fill="none" stroke="#e4e4e4" stroke-width="1.500"/></svg>
<div class="t" style="left:714.40px;top:653.02px;font-size:12px;line-height:1;color:#fff;letter-spacing:-0.132px;">Hide Folders</div>
<div style="position:absolute;left:1132.2px;top:642.9px;width:88.1px;height:26.3px;background:#333;border:2px solid #fff"></div>
<div class="t" style="left:1162.00px;top:650.02px;font-size:12px;line-height:1;color:#fff;letter-spacing:0.240px;">Save</div>
<div style="position:absolute;left:1231.8px;top:642.9px;width:88.4px;height:26.3px;background:#333;border:1px solid #e0e0e0"></div>
<div class="t" style="left:1256.50px;top:650.02px;font-size:12px;line-height:1;color:#fff;letter-spacing:-0.056px;">Cancel</div>
<svg style="position:absolute;left:1327px;top:671px;" width="8" height="8" viewBox="0 0 8 8"><rect x="6" y="0" width="1.400" height="1.400" fill="#bdbdbd"/><rect x="3" y="3" width="1.400" height="1.400" fill="#bdbdbd"/><rect x="6" y="3" width="1.400" height="1.400" fill="#bdbdbd"/><rect x="0" y="6" width="1.400" height="1.400" fill="#bdbdbd"/><rect x="3" y="6" width="1.400" height="1.400" fill="#bdbdbd"/><rect x="6" y="6" width="1.400" height="1.400" fill="#bdbdbd"/></svg>
<div class="hl" style="position:absolute;left:33px;top:176px;width:590px;height:34px;border-color:#fe0000"></div>
<div class="lb" style="position:absolute;left:628px;top:175px;width:39px;height:35px;border-color:#fe0000"></div>
<div class="t" style="left:647.00px;top:181.52px;font-size:22px;line-height:1;color:#000;transform:translateX(-50%);letter-spacing:0.000px;">A</div>
<div class="hl" style="position:absolute;left:33px;top:228px;width:587px;height:30px;border-color:#ffc000"></div>
<div class="lb" style="position:absolute;left:628px;top:225px;width:39px;height:35px;border-color:#ffc000"></div>
<div class="t" style="left:647.30px;top:231.52px;font-size:22px;line-height:1;color:#000;transform:translateX(-50%);letter-spacing:0.000px;">B</div>
<div class="hl" style="position:absolute;left:33px;top:276px;width:586px;height:30px;border-color:#70ad47"></div>
<div class="lb" style="position:absolute;left:627px;top:273px;width:39px;height:35px;border-color:#70ad47"></div>
<div class="t" style="left:646.60px;top:279.52px;font-size:22px;line-height:1;color:#000;transform:translateX(-50%);letter-spacing:0.000px;">C</div>
<div class="hl" style="position:absolute;left:33px;top:419px;width:586px;height:30px;border-color:#5b9bd5"></div>
<div class="lb" style="position:absolute;left:628px;top:416px;width:39px;height:35px;border-color:#5b9bd5"></div>
<div class="t" style="left:647.60px;top:422.52px;font-size:22px;line-height:1;color:#000;transform:translateX(-50%);letter-spacing:0.000px;">D</div>
<div class="hl" style="position:absolute;left:587px;top:489px;width:32px;height:30px;border-color:#4472c4"></div>
<div class="lb" style="position:absolute;left:627px;top:486px;width:39px;height:35px;border-color:#4472c4"></div>
<div class="t" style="left:647.30px;top:492.52px;font-size:22px;line-height:1;color:#000;transform:translateX(-50%);letter-spacing:0.000px;">E</div>
<div class="lb" style="position:absolute;left:992px;top:592px;width:39px;height:35px;border-color:#f406dc"></div>
<div class="t" style="left:1012.40px;top:599.52px;font-size:22px;line-height:1;color:#000;transform:translateX(-50%);letter-spacing:0.000px;">F</div>
<div class="hl" style="position:absolute;left:378px;top:684px;width:91px;height:30px;border-color:#7030a0"></div>
<div class="lb" style="position:absolute;left:335px;top:682px;width:39px;height:35px;border-color:#7030a0"></div>
<div class="t" style="left:354.90px;top:689.52px;font-size:22px;line-height:1;color:#000;transform:translateX(-50%);letter-spacing:0.000px;">G</div>
<div style="position:absolute;left:0px;top:0px;width:1355px;height:1px;background:#dedede"></div>
<div style="position:absolute;left:0px;top:1px;width:1355px;height:1px;background:#8c8c8c"></div>
<div style="position:absolute;left:0px;top:0px;width:1px;height:798px;background:#d4d4d4"></div>
<div style="position:absolute;left:1px;top:1px;width:1px;height:797px;background:#7c7c7c"></div>
<div style="position:absolute;left:1353px;top:1px;width:1px;height:797px;background:#8f8f8f"></div>
<div style="position:absolute;left:1354px;top:0px;width:1px;height:798px;background:#cfcfcf"></div>
<div style="position:absolute;left:0px;top:795px;width:1355px;height:3px;background:linear-gradient(#7f7f7f,#b2b2b2)"></div>
</body>
</html>
